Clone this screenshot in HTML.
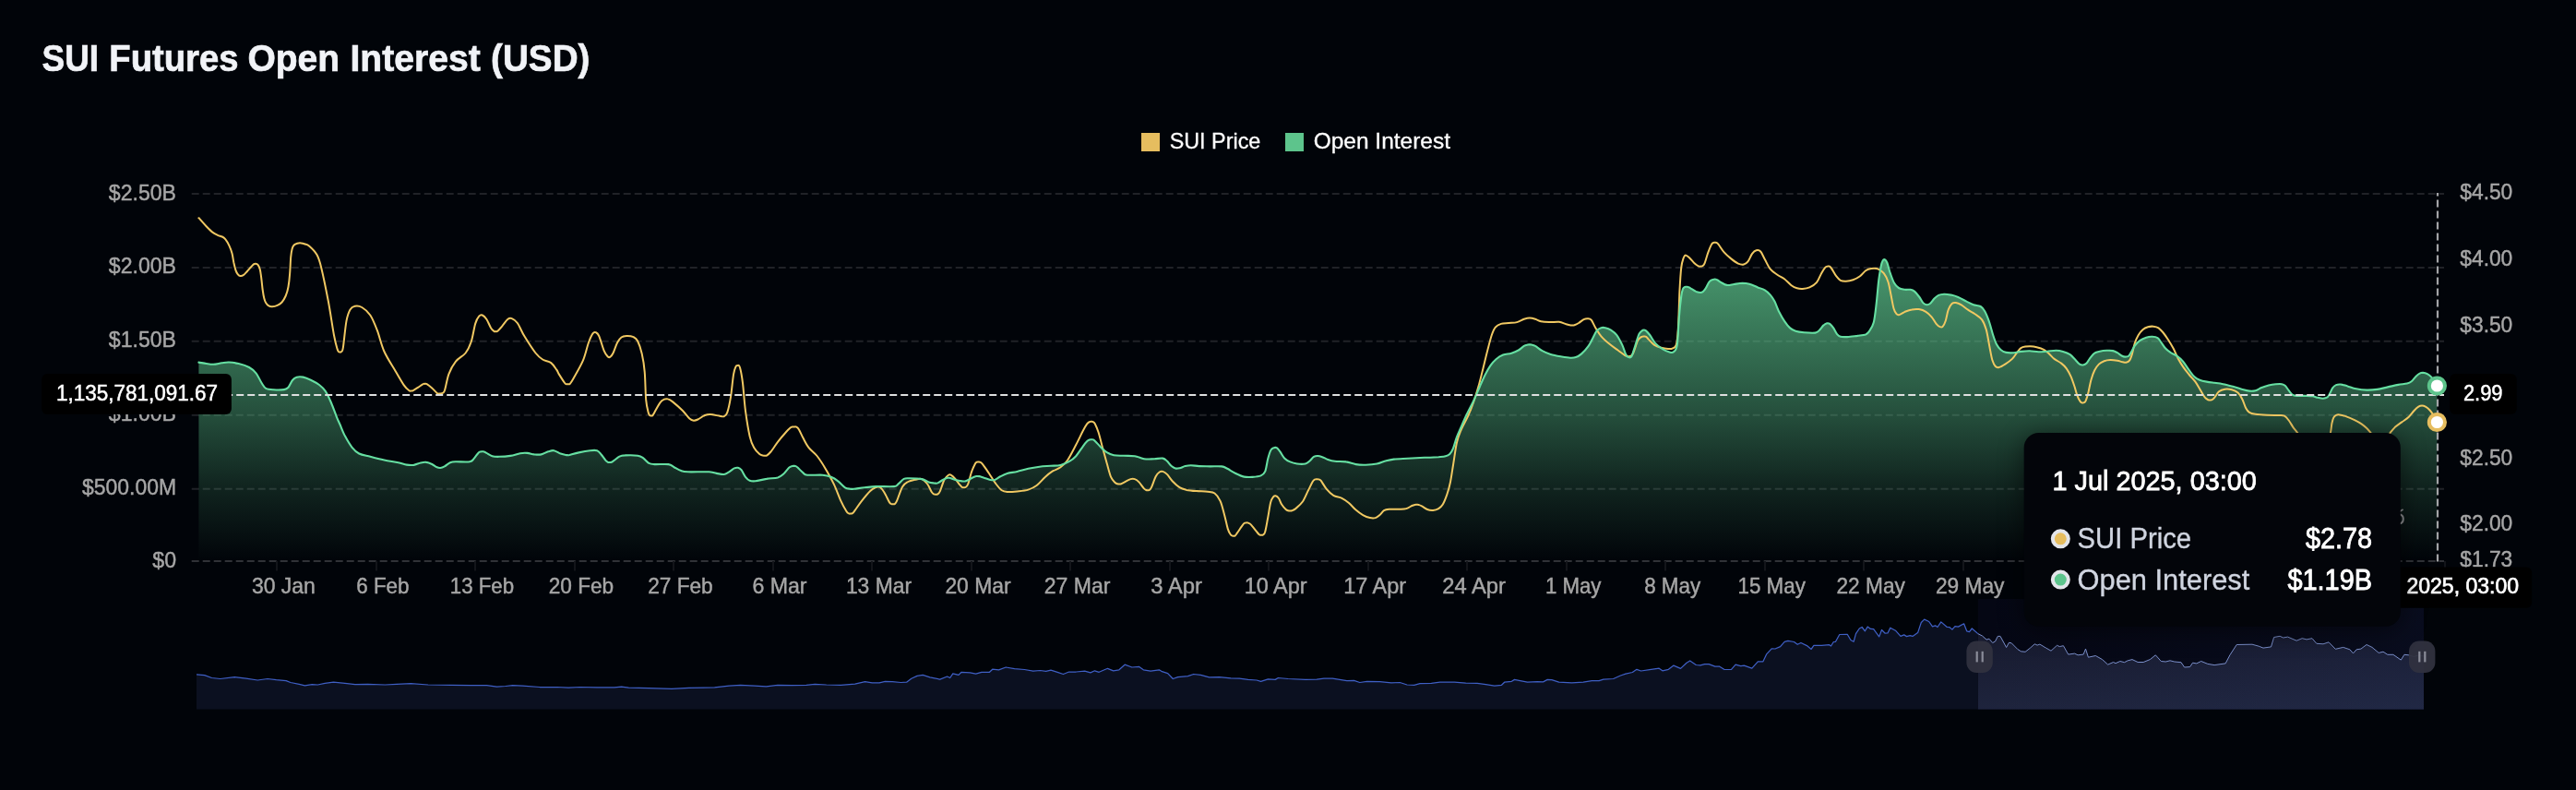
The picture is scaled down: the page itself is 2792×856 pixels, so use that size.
<!DOCTYPE html>
<html><head><meta charset="utf-8"><title>SUI Futures Open Interest (USD)</title>
<style>
html,body{margin:0;padding:0;background:#010409;}
body{width:2792px;height:856px;overflow:hidden;font-family:"Liberation Sans",sans-serif;}
svg{display:block;will-change:transform;font-family:"Liberation Sans",sans-serif;}
</style></head><body>
<svg width="2792" height="856" viewBox="0 0 2792 856">
<defs>
<linearGradient id="ga" x1="0" y1="281" x2="0" y2="608" gradientUnits="userSpaceOnUse">
<stop offset="0" stop-color="#5dc48c" stop-opacity="0.78"/>
<stop offset="0.5" stop-color="#5dc48c" stop-opacity="0.40"/>
<stop offset="0.75" stop-color="#5dc48c" stop-opacity="0.17"/>
<stop offset="1" stop-color="#5dc48c" stop-opacity="0.0"/>
</linearGradient>
<linearGradient id="gs" x1="0" y1="690" x2="0" y2="769" gradientUnits="userSpaceOnUse">
<stop offset="0" stop-color="#171a2e"/>
<stop offset="1" stop-color="#1e243d"/>
</linearGradient>
<linearGradient id="gh" x1="2143.8" y1="0" x2="2627" y2="0" gradientUnits="userSpaceOnUse">
<stop offset="0" stop-color="#506ec8" stop-opacity="0"/>
<stop offset="1" stop-color="#506ec8" stop-opacity="0.055"/>
</linearGradient>
<clipPath id="cw"><rect x="2143.8" y="649" width="483.2" height="119.8"/></clipPath>
<clipPath id="co"><rect x="213" y="649" width="1930.8" height="119.8"/></clipPath>
<filter id="sh" x="-20%" y="-20%" width="140%" height="140%"><feGaussianBlur stdDeviation="14"/></filter>
</defs>
<rect width="2792" height="856" fill="#010409"/>

<text x="45.6" y="77.2" font-size="40" fill="#f1f3f7" text-anchor="start" font-weight="700" textLength="61.4" lengthAdjust="spacingAndGlyphs" stroke="#f1f3f7" stroke-width="0.7">SUI</text>
<text x="118.3" y="77.2" font-size="40" fill="#f1f3f7" text-anchor="start" font-weight="700" textLength="140.1" lengthAdjust="spacingAndGlyphs" stroke="#f1f3f7" stroke-width="0.7">Futures</text>
<text x="268.5" y="77.2" font-size="40" fill="#f1f3f7" text-anchor="start" font-weight="700" textLength="99.6" lengthAdjust="spacingAndGlyphs" stroke="#f1f3f7" stroke-width="0.7">Open</text>
<text x="379.5" y="77.2" font-size="40" fill="#f1f3f7" text-anchor="start" font-weight="700" textLength="141.3" lengthAdjust="spacingAndGlyphs" stroke="#f1f3f7" stroke-width="0.7">Interest</text>
<text x="532.1" y="77.2" font-size="40" fill="#f1f3f7" text-anchor="start" font-weight="700" textLength="107.3" lengthAdjust="spacingAndGlyphs" stroke="#f1f3f7" stroke-width="0.7">(USD)</text>
<rect x="1237" y="144" width="20" height="20" fill="#e6bd5f"/>
<text x="1267.7" y="161" font-size="24" fill="#ffffff" text-anchor="start" font-weight="400" textLength="98.6" lengthAdjust="spacingAndGlyphs" stroke="#fff" stroke-width="0.3">SUI Price</text>
<rect x="1393" y="144" width="20" height="20" fill="#5dc48c"/>
<text x="1423.7" y="161" font-size="24" fill="#ffffff" text-anchor="start" font-weight="400" textLength="148.3" lengthAdjust="spacingAndGlyphs" stroke="#fff" stroke-width="0.3">Open Interest</text>
<line x1="207.7" x2="2649" y1="210" y2="210" stroke="#202227" stroke-width="2" stroke-dasharray="8 4"/>
<line x1="207.7" x2="2649" y1="289.9" y2="289.9" stroke="#202227" stroke-width="2" stroke-dasharray="8 4"/>
<line x1="207.7" x2="2649" y1="369.8" y2="369.8" stroke="#202227" stroke-width="2" stroke-dasharray="8 4"/>
<line x1="207.7" x2="2649" y1="449.8" y2="449.8" stroke="#202227" stroke-width="2" stroke-dasharray="8 4"/>
<line x1="207.7" x2="2649" y1="529.7" y2="529.7" stroke="#202227" stroke-width="2" stroke-dasharray="8 4"/>
<line x1="207.7" x2="2649" y1="608" y2="608" stroke="#303237" stroke-width="2" stroke-dasharray="8 4"/>
<line x1="300" x2="300" y1="608" y2="618.5" stroke="#13151a" stroke-width="2"/>
<line x1="408" x2="408" y1="608" y2="618.5" stroke="#13151a" stroke-width="2"/>
<line x1="515" x2="515" y1="608" y2="618.5" stroke="#13151a" stroke-width="2"/>
<line x1="623" x2="623" y1="608" y2="618.5" stroke="#13151a" stroke-width="2"/>
<line x1="730" x2="730" y1="608" y2="618.5" stroke="#13151a" stroke-width="2"/>
<line x1="838" x2="838" y1="608" y2="618.5" stroke="#13151a" stroke-width="2"/>
<line x1="945" x2="945" y1="608" y2="618.5" stroke="#13151a" stroke-width="2"/>
<line x1="1053" x2="1053" y1="608" y2="618.5" stroke="#13151a" stroke-width="2"/>
<line x1="1160" x2="1160" y1="608" y2="618.5" stroke="#13151a" stroke-width="2"/>
<line x1="1268" x2="1268" y1="608" y2="618.5" stroke="#13151a" stroke-width="2"/>
<line x1="1375" x2="1375" y1="608" y2="618.5" stroke="#13151a" stroke-width="2"/>
<line x1="1483" x2="1483" y1="608" y2="618.5" stroke="#13151a" stroke-width="2"/>
<line x1="1590" x2="1590" y1="608" y2="618.5" stroke="#13151a" stroke-width="2"/>
<line x1="1698" x2="1698" y1="608" y2="618.5" stroke="#13151a" stroke-width="2"/>
<line x1="1805" x2="1805" y1="608" y2="618.5" stroke="#13151a" stroke-width="2"/>
<line x1="1913" x2="1913" y1="608" y2="618.5" stroke="#13151a" stroke-width="2"/>
<line x1="2020" x2="2020" y1="608" y2="618.5" stroke="#13151a" stroke-width="2"/>
<line x1="2128" x2="2128" y1="608" y2="618.5" stroke="#13151a" stroke-width="2"/>
<line x1="2235" x2="2235" y1="608" y2="618.5" stroke="#13151a" stroke-width="2"/>
<line x1="2343" x2="2343" y1="608" y2="618.5" stroke="#13151a" stroke-width="2"/>
<line x1="2450" x2="2450" y1="608" y2="618.5" stroke="#13151a" stroke-width="2"/>
<line x1="2558" x2="2558" y1="608" y2="618.5" stroke="#13151a" stroke-width="2"/>
<line x1="2650" x2="2650" y1="608" y2="618.5" stroke="#13151a" stroke-width="2"/>
<path d="M215.4,392.6C216.8,392.8 221.0,393.6 223.7,394.0C226.3,394.4 228.5,394.9 231.3,394.8C234.1,394.7 237.6,393.7 240.4,393.3C243.2,392.9 245.0,392.4 248.0,392.5C251.0,392.6 254.9,393.1 258.6,394.0C262.3,394.9 266.9,396.3 270.0,398.0C273.1,399.7 275.2,401.5 277.5,404.3C279.8,407.1 281.8,412.2 283.6,415.0C285.4,417.8 286.1,419.6 288.2,420.8C290.3,422.0 293.2,422.1 296.5,422.3C299.8,422.5 305.3,422.5 308.0,422.1C310.7,421.7 311.0,421.4 312.5,419.7C314.0,418.0 315.5,413.8 317.0,412.0C318.5,410.2 319.7,409.3 321.6,408.7C323.5,408.1 326.0,408.1 328.5,408.6C331.0,409.1 333.9,410.3 336.8,411.7C339.7,413.1 343.4,415.0 346.0,417.0C348.6,419.0 350.6,420.6 352.7,423.8C354.8,427.0 356.8,431.3 358.8,436.0C360.8,440.7 363.3,447.8 364.9,451.8C366.5,455.8 367.0,456.5 368.5,460.0C370.0,463.5 371.8,468.5 374.0,472.6C376.2,476.7 379.1,481.7 381.6,484.8C384.1,487.9 385.9,489.8 389.2,491.5C392.5,493.2 396.8,493.6 401.3,494.8C405.9,496.0 411.4,497.4 416.5,498.5C421.6,499.6 427.6,500.3 431.7,501.2C435.8,502.1 438.0,503.2 440.8,503.6C443.6,504.1 445.9,504.2 448.4,503.9C450.9,503.5 453.7,502.0 456.0,501.5C458.3,501.0 460.1,500.6 462.1,500.9C464.1,501.1 466.3,502.1 468.2,503.0C470.1,503.9 472.1,505.6 473.6,506.3C475.1,507.0 475.9,507.1 477.3,507.0C478.7,506.9 480.0,506.4 481.8,505.4C483.6,504.4 485.9,502.0 487.9,501.2C489.9,500.4 490.4,500.4 494.0,500.3C497.6,500.2 505.9,500.9 509.2,500.3C512.5,499.7 512.2,498.5 513.7,496.9C515.2,495.3 517.1,492.1 518.3,490.9C519.5,489.7 520.0,489.7 520.8,489.5C521.5,489.2 522.1,489.3 522.8,489.3C523.5,489.3 524.0,489.2 524.8,489.5C525.6,489.7 525.9,490.1 527.4,490.9C528.9,491.7 531.2,493.5 533.5,494.2C535.8,494.9 537.8,494.9 541.1,494.8C544.4,494.8 549.4,494.5 553.2,493.9C557.0,493.3 560.8,491.7 563.8,491.2C566.8,490.7 568.9,490.7 571.4,490.9C573.9,491.1 576.5,492.1 579.0,492.4C581.5,492.6 584.1,492.9 586.6,492.4C589.1,491.9 591.9,490.0 594.2,489.3C596.5,488.6 598.1,487.8 600.3,488.2C602.5,488.6 605.5,490.8 607.6,491.6C609.8,492.4 611.9,492.8 613.2,493.0C614.5,493.3 614.5,493.1 615.2,493.1C615.9,493.1 615.2,493.4 617.2,493.0C619.2,492.5 623.6,491.2 627.3,490.4C631.0,489.6 636.2,488.6 639.5,488.2C642.8,487.8 645.1,487.5 647.1,488.2C649.1,488.9 650.1,490.8 651.6,492.5C653.1,494.2 655.0,497.2 656.2,498.6C657.4,500.0 658.0,500.3 658.7,500.7C659.5,501.1 660.0,501.0 660.7,501.0C661.4,501.0 661.9,501.1 662.7,500.8C663.5,500.5 663.8,500.2 665.3,499.2C666.8,498.2 669.4,495.6 671.4,494.6C673.4,493.6 674.1,493.5 677.4,493.4C680.7,493.2 687.8,493.2 691.1,493.7C694.4,494.2 695.2,495.0 697.2,496.4C699.2,497.8 701.3,500.8 703.3,501.9C705.3,503.0 705.8,502.9 709.3,503.1C712.8,503.3 721.0,502.6 724.5,503.1C728.0,503.6 728.3,505.0 730.6,506.2C732.9,507.4 735.7,509.2 738.2,510.1C740.7,511.0 740.7,511.1 745.8,511.3C750.9,511.5 763.3,511.0 768.6,511.3C773.9,511.6 775.0,512.6 777.7,513.1C780.4,513.6 782.7,514.2 784.7,514.0C786.7,513.8 787.9,512.7 789.8,511.6C791.7,510.5 794.2,508.2 795.9,507.4C797.6,506.6 798.5,506.5 799.8,506.8C801.1,507.1 802.1,507.5 803.5,509.2C804.9,510.9 806.5,514.9 808.0,516.8C809.5,518.7 810.8,520.0 812.6,520.7C814.4,521.5 815.7,521.6 818.7,521.3C821.7,521.0 826.8,519.5 830.8,518.9C834.8,518.2 840.0,518.2 843.0,517.4C846.0,516.5 847.0,515.6 849.0,513.8C851.0,512.0 853.5,508.3 855.1,506.8C856.7,505.3 857.7,505.4 858.6,505.1C859.5,504.7 860.0,504.9 860.6,504.9C861.2,504.9 861.8,504.8 862.5,505.1C863.2,505.4 863.5,505.6 864.8,506.8C866.1,508.0 868.6,510.9 870.3,512.2C872.0,513.5 871.3,514.3 874.9,514.7C878.5,515.1 887.3,514.4 891.6,514.7C895.9,515.1 897.9,515.7 900.7,516.8C903.5,517.9 905.8,519.4 908.3,521.3C910.8,523.2 913.7,526.9 915.9,528.3C918.1,529.7 920.2,529.5 921.5,529.7C922.8,530.0 922.8,529.8 923.5,529.8C924.2,529.8 923.2,530.0 925.5,529.7C927.8,529.5 933.1,528.7 937.1,528.3C941.1,527.9 944.0,527.3 949.3,527.1C954.6,526.9 965.0,527.6 969.0,527.1C973.0,526.6 971.8,525.8 973.6,524.4C975.4,523.0 977.7,519.9 979.7,518.9C981.7,517.9 982.5,518.3 985.7,518.3C988.9,518.3 995.6,518.4 999.1,519.1C1002.6,519.8 1004.5,521.7 1006.7,522.4C1008.9,523.1 1011.0,523.3 1012.3,523.5C1013.6,523.7 1013.6,523.6 1014.3,523.6C1015.0,523.6 1015.0,524.0 1016.3,523.4C1017.6,522.8 1020.3,520.9 1021.9,520.0C1023.5,519.1 1025.0,518.3 1026.0,518.0C1027.0,517.6 1027.3,517.8 1028.0,517.8C1028.7,517.8 1028.7,517.6 1030.0,517.9C1031.3,518.3 1033.5,519.4 1035.6,520.0C1037.7,520.6 1041.2,521.2 1042.7,521.4C1044.2,521.7 1044.0,521.5 1044.7,521.5C1045.4,521.5 1045.4,521.8 1046.7,521.3C1048.0,520.8 1050.5,519.4 1052.3,518.5C1054.0,517.6 1056.0,516.6 1057.2,516.2C1058.4,515.8 1058.5,516.0 1059.2,516.0C1059.9,516.0 1060.1,515.9 1061.2,516.1C1062.3,516.4 1063.9,516.9 1065.9,517.5C1068.0,518.1 1071.5,519.6 1073.5,520.0C1075.5,520.4 1076.3,520.6 1078.1,520.0C1079.9,519.4 1081.9,517.5 1084.2,516.3C1086.5,515.1 1088.7,513.9 1091.7,513.0C1094.7,512.1 1098.6,511.8 1102.4,510.9C1106.2,510.0 1110.5,508.7 1114.5,507.8C1118.5,506.9 1122.7,506.2 1126.7,505.7C1130.8,505.2 1135.0,505.1 1138.8,504.8C1142.6,504.5 1146.2,504.7 1149.5,503.9C1152.8,503.1 1155.8,501.8 1158.6,500.2C1161.4,498.6 1163.7,497.0 1166.2,494.2C1168.7,491.4 1171.8,486.2 1173.8,483.5C1175.8,480.8 1177.1,479.3 1178.3,478.1C1179.5,476.9 1180.1,476.7 1180.9,476.4C1181.7,476.1 1182.2,476.2 1182.9,476.2C1183.6,476.2 1184.2,476.1 1184.9,476.4C1185.7,476.8 1186.0,477.0 1187.4,478.4C1188.8,479.8 1191.5,483.0 1193.5,485.0C1195.5,487.0 1197.3,488.8 1199.6,490.2C1201.9,491.6 1204.2,492.6 1207.2,493.2C1210.2,493.8 1214.0,493.6 1217.8,493.8C1221.6,494.0 1226.9,493.8 1229.9,494.2C1232.9,494.6 1234.0,495.4 1236.0,496.0C1238.0,496.6 1239.6,497.3 1242.1,497.5C1244.6,497.7 1248.2,497.3 1251.2,497.2C1254.2,497.1 1258.0,496.2 1260.3,496.6C1262.6,497.0 1263.4,498.2 1264.9,499.6C1266.4,501.0 1267.9,503.5 1269.4,504.8C1270.9,506.1 1272.5,507.1 1274.0,507.5C1275.5,507.9 1276.7,507.6 1278.5,507.2C1280.3,506.8 1282.6,505.6 1284.6,505.1C1286.6,504.6 1288.2,504.2 1290.7,504.2C1293.2,504.2 1296.3,504.9 1299.8,505.1C1303.3,505.3 1307.9,505.3 1311.9,505.4C1316.0,505.4 1321.0,505.0 1324.1,505.4C1327.1,505.8 1327.7,506.5 1330.2,507.8C1332.7,509.1 1336.3,511.5 1339.3,513.0C1342.3,514.5 1345.4,516.0 1348.4,516.6C1351.4,517.2 1354.5,517.1 1357.5,516.9C1360.5,516.7 1364.3,516.4 1366.6,515.4C1368.9,514.4 1369.9,513.9 1371.2,510.9C1372.5,507.9 1373.2,501.0 1374.2,497.2C1375.2,493.4 1376.2,490.1 1377.2,488.1C1378.2,486.1 1379.2,485.9 1380.3,485.4C1381.4,484.9 1382.4,484.5 1383.6,485.2C1384.8,485.9 1386.2,487.8 1387.6,489.7C1389.0,491.6 1390.3,494.6 1392.1,496.4C1393.9,498.2 1395.9,499.4 1398.2,500.4C1400.5,501.4 1403.0,502.1 1405.8,502.5C1408.6,502.9 1412.6,503.0 1414.9,502.5C1417.2,502.0 1418.0,500.8 1419.5,499.5C1421.0,498.2 1422.5,495.8 1424.0,494.9C1425.5,494.0 1427.1,493.9 1428.6,494.0C1430.1,494.1 1431.4,494.6 1433.2,495.2C1435.0,495.8 1436.9,497.1 1439.2,497.9C1441.5,498.7 1443.5,499.4 1446.8,499.8C1450.1,500.2 1455.2,499.8 1459.0,500.4C1462.8,500.9 1466.1,502.6 1469.6,503.1C1473.1,503.7 1476.4,503.8 1480.2,503.7C1484.0,503.6 1488.9,503.2 1492.4,502.5C1496.0,501.8 1498.5,500.3 1501.5,499.5C1504.5,498.7 1506.5,498.1 1510.6,497.6C1514.6,497.1 1520.2,497.0 1525.8,496.7C1531.4,496.4 1538.4,496.1 1544.0,495.8C1549.6,495.6 1555.4,495.4 1559.2,495.2C1563.0,494.9 1564.8,494.9 1566.8,494.3C1568.8,493.8 1569.9,493.3 1571.3,491.9C1572.7,490.5 1573.7,488.9 1575.0,485.8C1576.3,482.8 1577.5,477.4 1578.9,473.6C1580.3,469.8 1581.7,467.1 1583.5,463.0C1585.3,458.9 1587.3,454.1 1589.6,449.3C1591.9,444.5 1594.9,439.0 1597.2,434.2C1599.5,429.4 1601.2,425.1 1603.2,420.5C1605.2,415.9 1607.3,410.9 1609.3,406.8C1611.3,402.8 1613.4,399.1 1615.4,396.2C1617.4,393.3 1619.2,391.1 1621.5,389.2C1623.8,387.3 1626.3,385.7 1629.1,384.6C1631.9,383.5 1635.4,383.7 1638.2,382.8C1641.0,381.9 1643.5,380.8 1645.8,379.5C1648.1,378.2 1650.1,375.9 1651.8,374.9C1653.5,373.9 1654.9,373.8 1655.9,373.5C1656.9,373.3 1657.2,373.4 1657.9,373.4C1658.6,373.4 1658.9,373.3 1659.9,373.5C1660.9,373.8 1662.0,373.8 1664.0,374.9C1666.0,376.0 1668.8,378.6 1671.6,380.1C1674.4,381.6 1677.2,382.9 1680.7,384.0C1684.2,385.1 1689.3,385.9 1692.8,386.5C1696.3,387.1 1699.4,387.6 1701.9,387.7C1704.4,387.8 1706.0,387.8 1708.0,387.1C1710.0,386.4 1711.8,385.4 1714.1,383.4C1716.4,381.4 1719.7,377.7 1721.7,374.9C1723.7,372.1 1724.7,369.5 1726.2,366.7C1727.7,363.9 1729.3,360.1 1730.8,358.2C1732.3,356.3 1733.9,355.7 1735.4,355.2C1736.9,354.7 1738.1,354.8 1739.9,355.2C1741.7,355.6 1744.0,356.3 1746.0,357.6C1748.0,358.9 1750.1,360.2 1752.1,362.8C1754.1,365.4 1756.4,369.9 1758.1,373.4C1759.8,376.9 1760.9,381.7 1762.1,384.0C1763.3,386.3 1764.1,386.7 1765.1,387.1C1766.1,387.5 1767.2,388.0 1768.2,386.5C1769.2,385.0 1770.3,380.7 1771.2,378.0C1772.1,375.3 1772.7,373.2 1773.6,370.5C1774.5,367.8 1775.5,363.6 1776.7,361.5C1777.9,359.4 1779.4,358.4 1780.6,357.8C1781.8,357.2 1782.4,357.2 1783.7,358.1C1785.0,359.0 1786.4,360.7 1788.2,363.0C1790.0,365.3 1792.0,369.6 1794.3,372.1C1796.6,374.6 1799.4,376.6 1801.9,378.2C1804.4,379.8 1807.5,381.0 1809.5,381.5C1811.5,382.0 1812.6,382.5 1814.0,381.2C1815.4,379.9 1816.8,379.9 1817.8,373.6C1818.8,367.3 1819.1,352.2 1819.9,343.3C1820.6,334.4 1821.6,325.6 1822.3,320.5C1823.0,315.4 1823.5,314.5 1824.1,312.9C1824.7,311.3 1825.5,311.4 1826.1,311.0C1826.7,310.7 1827.1,310.8 1827.7,310.8C1828.3,310.8 1828.9,310.7 1829.7,311.0C1830.5,311.2 1830.9,311.5 1832.3,312.3C1833.7,313.1 1836.3,315.1 1838.3,315.9C1840.3,316.6 1842.7,317.3 1844.4,316.8C1846.1,316.3 1847.0,314.8 1848.4,312.9C1849.8,311.0 1851.2,307.0 1852.6,305.3C1854.0,303.6 1855.3,303.3 1856.6,302.9C1857.9,302.5 1859.0,302.3 1860.5,302.9C1862.0,303.4 1863.8,305.2 1865.7,306.2C1867.6,307.2 1869.4,308.6 1871.7,308.9C1874.0,309.2 1876.5,308.4 1879.3,308.0C1882.1,307.6 1885.7,306.9 1888.5,306.8C1891.3,306.8 1893.2,306.9 1896.0,307.7C1898.8,308.5 1902.4,310.3 1905.2,311.4C1908.0,312.5 1910.5,313.0 1912.8,314.4C1915.1,315.8 1917.0,317.6 1918.8,319.6C1920.6,321.6 1921.9,323.7 1923.4,326.6C1924.9,329.5 1926.1,333.7 1927.9,337.2C1929.7,340.7 1932.0,344.8 1934.0,347.8C1936.0,350.8 1938.1,353.6 1940.1,355.4C1942.1,357.2 1943.7,358.0 1946.2,358.8C1948.7,359.6 1951.8,360.0 1955.3,360.3C1958.8,360.6 1964.6,361.0 1967.4,360.6C1970.2,360.2 1970.5,359.2 1972.0,357.8C1973.5,356.4 1975.1,353.6 1976.5,352.4C1977.9,351.1 1979.1,350.6 1980.2,350.3C1981.3,350.1 1982.0,350.0 1983.2,350.9C1984.4,351.8 1985.9,353.5 1987.2,355.4C1988.5,357.3 1989.8,360.5 1991.1,362.1C1992.4,363.7 1992.9,364.3 1994.8,364.8C1996.7,365.3 1999.3,365.2 2002.3,365.1C2005.3,365.0 2009.7,364.3 2013.0,363.9C2016.3,363.4 2020.0,363.1 2022.1,362.4C2024.2,361.6 2024.2,361.6 2025.7,359.4C2027.2,357.2 2029.5,354.5 2030.8,349.3C2032.1,344.1 2032.9,335.7 2033.8,328.1C2034.7,320.5 2035.4,310.4 2036.2,303.8C2037.0,297.2 2038.0,292.2 2038.7,288.6C2039.4,285.1 2039.9,283.7 2040.6,282.5C2041.3,281.3 2042.0,280.9 2042.8,281.3C2043.6,281.7 2044.5,282.5 2045.5,285.0C2046.5,287.5 2047.5,292.6 2048.8,296.2C2050.1,299.8 2051.6,304.2 2053.1,306.8C2054.6,309.4 2056.0,310.8 2057.9,312.0C2059.8,313.2 2062.5,313.5 2064.6,313.8C2066.7,314.1 2068.9,313.5 2070.7,313.8C2072.5,314.1 2073.6,314.5 2075.2,315.9C2076.8,317.3 2078.9,320.0 2080.4,322.0C2081.9,324.0 2083.0,326.7 2084.3,328.1C2085.6,329.5 2087.0,330.1 2088.3,330.2C2089.6,330.3 2090.5,330.1 2091.9,329.0C2093.3,327.9 2095.0,325.0 2096.5,323.5C2098.0,322.0 2099.3,320.7 2101.1,319.9C2102.9,319.1 2104.8,318.8 2107.1,318.7C2109.4,318.6 2112.2,319.1 2114.7,319.6C2117.2,320.2 2119.5,320.8 2122.3,322.0C2125.1,323.2 2128.6,325.2 2131.4,326.6C2134.2,328.0 2136.5,329.3 2139.0,330.2C2141.5,331.1 2144.6,330.8 2146.6,332.0C2148.6,333.2 2149.7,334.6 2151.2,337.2C2152.7,339.8 2154.2,343.6 2155.7,347.8C2157.2,352.0 2158.7,358.4 2160.0,362.5C2161.3,366.6 2162.4,369.9 2163.8,372.7C2165.2,375.4 2166.8,377.5 2168.5,379.0C2170.2,380.5 2171.8,381.4 2174.2,381.9C2176.6,382.4 2180.1,382.4 2182.8,382.2C2185.5,382.0 2187.6,381.2 2190.4,380.9C2193.2,380.6 2196.7,380.2 2199.9,380.3C2203.1,380.4 2206.2,381.2 2209.4,381.3C2212.6,381.4 2215.7,380.9 2218.9,380.7C2222.1,380.4 2225.6,379.8 2228.4,379.8C2231.2,379.8 2233.5,380.2 2236.0,380.9C2238.5,381.6 2241.4,382.6 2243.6,384.1C2245.8,385.6 2247.6,388.1 2249.3,389.8C2251.0,391.6 2252.6,393.7 2254.0,394.6C2255.4,395.6 2256.5,395.7 2257.8,395.5C2259.1,395.3 2260.3,394.9 2261.6,393.6C2262.9,392.3 2264.0,389.7 2265.4,387.9C2266.8,386.1 2268.4,383.8 2270.2,382.6C2271.9,381.4 2273.7,381.2 2275.9,380.7C2278.1,380.2 2281.1,379.9 2283.5,379.8C2285.9,379.7 2288.2,379.7 2290.1,380.1C2292.0,380.5 2293.3,381.3 2294.9,382.2C2296.5,383.1 2298.2,384.8 2299.6,385.5C2301.0,386.2 2302.1,386.6 2303.4,386.6C2304.7,386.6 2306.1,386.6 2307.2,385.7C2308.3,384.8 2308.9,383.1 2310.0,381.3C2311.1,379.5 2312.2,376.7 2313.8,374.6C2315.4,372.5 2317.4,370.4 2319.5,368.9C2321.6,367.4 2324.0,366.4 2326.2,365.7C2328.4,365.0 2330.8,364.7 2332.8,364.8C2334.9,364.9 2336.9,365.1 2338.5,366.1C2340.1,367.1 2340.9,368.9 2342.3,370.8C2343.7,372.7 2345.3,375.6 2347.1,377.5C2348.8,379.4 2350.8,380.8 2352.8,382.2C2354.9,383.6 2357.2,384.1 2359.4,385.7C2361.6,387.3 2363.9,389.1 2366.1,391.7C2368.3,394.3 2370.6,398.4 2372.7,401.2C2374.8,404.0 2376.5,406.6 2378.4,408.3C2380.3,410.1 2381.9,410.8 2384.1,411.7C2386.3,412.6 2389.0,413.1 2391.7,413.6C2394.3,414.1 2397.0,414.4 2400.0,414.8C2403.0,415.2 2406.0,415.5 2409.5,416.2C2413.0,416.9 2417.4,418.1 2420.9,419.0C2424.4,419.9 2427.6,421.1 2430.4,421.9C2433.2,422.7 2435.6,423.4 2438.0,423.6C2440.4,423.8 2442.4,423.8 2444.6,423.2C2446.8,422.6 2448.9,420.9 2451.3,420.0C2453.7,419.1 2456.4,418.1 2458.9,417.5C2461.4,416.9 2464.1,416.5 2466.5,416.3C2468.9,416.1 2471.4,415.9 2473.1,416.2C2474.8,416.5 2475.6,416.9 2476.9,418.1C2478.2,419.3 2479.4,421.6 2480.7,423.2C2482.0,424.8 2483.1,426.7 2484.5,427.6C2485.9,428.6 2486.9,428.7 2489.3,428.9C2491.7,429.1 2496.0,428.8 2498.8,428.9C2501.7,429.0 2504.2,429.0 2506.4,429.3C2508.6,429.6 2510.2,430.4 2512.1,430.8C2514.0,431.2 2516.1,431.8 2517.8,431.7C2519.5,431.6 2521.2,431.3 2522.5,430.4C2523.8,429.4 2524.5,427.7 2525.4,426.0C2526.3,424.3 2527.1,421.8 2528.2,420.3C2529.3,418.8 2530.6,417.7 2532.0,417.1C2533.4,416.5 2534.8,416.3 2536.8,416.5C2538.9,416.7 2541.5,417.6 2544.3,418.4C2547.1,419.2 2550.3,420.6 2553.8,421.3C2557.3,422.0 2561.4,422.5 2565.2,422.6C2569.0,422.7 2572.8,422.4 2576.6,421.9C2580.4,421.4 2584.2,420.2 2588.0,419.4C2591.8,418.6 2595.9,417.5 2599.4,416.9C2602.9,416.3 2606.5,416.2 2608.9,415.6C2611.3,415.0 2612.1,414.6 2613.7,413.3C2615.3,412.0 2617.0,409.4 2618.4,408.0C2619.8,406.6 2620.9,405.5 2622.2,404.8C2623.5,404.1 2624.6,403.8 2626.0,403.8C2627.4,403.9 2629.2,404.2 2630.8,405.1C2632.4,406.0 2634.1,407.3 2635.5,408.9C2636.9,410.5 2638.3,413.1 2639.3,414.6C2640.3,416.1 2641.1,417.4 2641.4,418.0L2641.4,608.0L215.4,608.0Z" fill="url(#ga)"/>
<path d="M215.4,236.2C215.6,236.4 215.1,235.7 216.4,237.2C217.7,238.7 221.1,242.6 223.4,245.0C225.7,247.4 228.2,250.0 230.3,251.6C232.4,253.2 234.2,254.0 235.9,254.8C237.7,255.6 239.4,255.8 240.8,256.5C242.2,257.2 242.9,257.6 244.2,259.2C245.5,260.8 247.2,263.6 248.4,266.2C249.6,268.8 250.7,271.5 251.5,274.5C252.3,277.5 252.7,281.3 253.3,284.3C254.0,287.3 254.7,290.5 255.4,292.6C256.1,294.7 256.7,295.8 257.5,296.8C258.3,297.9 259.2,298.7 260.2,298.9C261.2,299.1 262.4,299.0 263.7,298.2C265.0,297.4 266.5,295.5 267.9,294.0C269.3,292.5 270.9,290.5 272.1,289.2C273.3,287.9 274.1,287.0 274.9,286.4C275.7,285.8 276.2,285.6 277.0,285.7C277.8,285.8 278.9,286.1 279.7,287.1C280.5,288.2 281.2,289.7 281.8,292.0C282.4,294.3 282.7,297.4 283.2,301.0C283.7,304.6 284.1,309.8 284.6,313.5C285.1,317.2 285.7,320.9 286.3,323.3C286.9,325.7 287.3,326.8 288.1,328.1C288.9,329.4 289.8,330.5 290.9,331.2C292.0,331.9 293.4,332.4 295.0,332.3C296.6,332.2 298.9,331.7 300.6,330.9C302.4,330.1 304.0,329.2 305.5,327.5C307.0,325.8 308.5,323.3 309.7,320.5C310.9,317.7 311.8,314.6 312.5,310.7C313.2,306.8 313.7,302.1 314.1,296.8C314.6,291.5 314.8,283.2 315.2,278.7C315.6,274.2 316.0,271.9 316.6,269.7C317.2,267.5 317.8,266.5 318.7,265.5C319.6,264.5 320.9,264.1 322.2,263.7C323.5,263.3 325.0,263.3 326.4,263.4C327.8,263.5 329.2,264.0 330.6,264.5C332.0,265.0 332.8,264.6 335.0,266.5C337.2,268.4 341.4,272.3 343.6,276.2C345.8,280.1 346.2,281.5 348.2,289.9C350.2,298.2 353.5,314.2 355.8,326.3C358.1,338.4 360.3,354.1 361.9,362.7C363.5,371.3 364.6,374.8 365.5,377.9C366.4,381.0 366.6,380.6 367.1,381.2C367.6,381.8 368.0,381.6 368.5,381.6C369.0,381.6 369.5,381.9 370.0,381.0C370.6,380.2 371.0,382.0 371.9,376.4C372.8,370.8 374.2,354.4 375.5,347.6C376.8,340.8 378.0,338.0 379.5,335.4C381.0,332.8 382.5,332.2 384.6,331.8C386.7,331.4 389.4,331.4 392.2,333.0C395.0,334.6 398.5,337.3 401.3,341.5C404.1,345.7 406.4,351.6 408.9,358.2C411.4,364.8 413.2,373.7 416.5,381.0C419.8,388.3 425.1,396.1 428.7,402.2C432.2,408.3 435.4,413.9 437.8,417.4C440.2,420.9 442.1,422.1 443.4,423.1C444.7,424.1 444.7,423.5 445.4,423.5C446.1,423.5 446.1,423.9 447.4,423.3C448.7,422.7 451.1,421.1 453.0,419.9C454.9,418.7 457.3,416.8 458.6,416.2C459.9,415.5 459.9,415.9 460.6,415.9C461.3,415.9 461.3,415.4 462.6,416.2C463.9,417.0 466.3,418.8 468.2,420.5C470.1,422.2 472.5,425.1 473.8,426.1C475.1,427.1 475.1,426.5 475.8,426.5C476.5,426.5 476.8,426.8 477.8,426.3C478.8,425.8 480.4,427.0 481.8,423.5C483.2,420.0 484.4,410.6 486.4,405.3C488.4,400.0 491.0,395.4 494.0,391.6C497.0,387.8 501.8,386.1 504.6,382.5C507.4,378.9 508.9,375.6 510.7,370.3C512.5,365.0 513.8,355.2 515.2,350.6C516.6,346.0 517.9,344.2 519.2,342.7C520.5,341.2 521.4,340.9 522.8,341.5C524.2,342.1 525.9,343.7 527.4,346.0C528.9,348.3 530.7,353.1 532.0,355.2C533.3,357.3 534.5,358.1 535.4,358.8C536.3,359.4 536.7,359.1 537.4,359.1C538.1,359.1 538.3,359.6 539.4,358.7C540.5,357.8 542.3,355.7 544.1,353.6C545.9,351.5 548.4,347.4 550.2,346.0C552.0,344.6 552.9,344.4 554.7,345.1C556.5,345.8 558.5,346.8 560.8,350.0C563.1,353.2 565.1,358.9 568.4,364.3C571.7,369.7 577.2,378.3 580.5,382.5C583.8,386.7 585.3,387.7 588.1,389.5C590.9,391.3 594.7,391.2 597.2,393.1C599.7,395.0 601.8,398.6 603.3,400.7C604.8,402.8 604.6,403.5 606.1,405.9C607.6,408.3 610.8,413.3 612.1,415.0C613.4,416.7 613.5,415.9 614.1,416.2C614.8,416.4 615.2,416.4 615.8,416.3C616.4,416.2 616.9,416.8 617.8,415.8C618.7,414.8 618.9,414.7 621.3,410.5C623.6,406.3 629.1,397.3 631.9,390.7C634.7,384.1 636.2,375.9 638.0,371.0C639.8,366.1 641.2,363.1 642.5,361.3C643.8,359.5 644.5,359.7 645.6,360.1C646.7,360.6 647.7,360.7 649.2,364.0C650.7,367.3 653.1,376.4 654.7,380.1C656.3,383.8 657.5,385.1 658.6,386.2C659.7,387.3 660.4,387.5 661.4,386.8C662.4,386.1 663.4,384.8 664.7,382.2C666.0,379.6 667.7,373.8 669.2,371.0C670.7,368.2 671.9,366.7 673.5,365.5C675.1,364.3 676.8,364.1 679.0,364.0C681.2,363.9 684.6,364.3 686.6,365.2C688.6,366.1 689.6,366.5 691.1,369.5C692.6,372.5 694.4,377.6 695.7,383.2C697.0,388.8 698.0,394.5 698.7,402.9C699.5,411.2 699.5,426.0 700.2,433.3C700.9,440.6 702.0,444.1 702.7,446.9C703.4,449.7 703.9,449.6 704.4,450.2C704.9,450.8 705.2,450.6 705.7,450.6C706.2,450.6 706.7,450.8 707.3,450.2C707.9,449.6 708.0,449.2 709.3,446.9C710.6,444.6 713.6,438.7 715.4,436.3C717.2,433.9 718.6,433.4 720.0,432.7C721.4,432.0 722.4,431.9 723.9,432.4C725.4,432.8 726.5,433.3 729.1,435.4C731.7,437.5 736.7,441.8 739.7,444.8C742.7,447.8 745.3,451.8 747.3,453.6C749.3,455.4 750.4,455.6 751.9,455.7C753.4,455.8 754.4,455.4 756.4,454.5C758.4,453.6 761.7,450.9 764.0,450.0C766.3,449.1 767.6,449.0 770.1,449.1C772.6,449.2 776.8,450.2 779.2,450.6C781.6,451.0 783.2,451.8 784.7,451.2C786.2,450.6 787.1,450.4 788.3,446.9C789.5,443.4 790.9,437.0 792.0,430.2C793.1,423.4 794.1,411.4 795.0,405.9C795.9,400.4 796.6,399.1 797.4,397.4C798.1,395.7 798.7,395.8 799.5,395.9C800.3,396.0 801.1,395.1 802.0,398.3C802.9,401.5 804.0,407.1 805.0,415.0C806.0,422.9 806.7,435.8 808.0,445.4C809.3,455.0 811.1,466.1 812.6,472.7C814.1,479.3 815.4,481.7 817.2,484.9C819.0,488.1 821.5,490.5 823.2,491.9C824.9,493.3 826.3,493.3 827.3,493.6C828.3,493.9 828.6,493.7 829.3,493.7C830.0,493.7 830.3,494.1 831.3,493.4C832.3,492.7 833.4,491.9 835.4,489.5C837.4,487.1 840.5,482.1 843.0,478.8C845.5,475.5 848.3,472.2 850.6,469.7C852.9,467.2 855.2,464.8 856.6,463.6C858.0,462.4 858.4,462.7 859.2,462.5C860.0,462.3 860.5,462.4 861.2,462.4C861.9,462.4 862.4,462.2 863.2,462.7C864.0,463.2 864.6,463.3 865.8,465.2C867.0,467.1 868.5,471.0 870.3,474.3C872.1,477.6 873.9,481.6 876.4,484.9C878.9,488.2 882.5,490.2 885.5,494.0C888.5,497.8 891.6,502.6 894.6,507.7C897.6,512.8 900.9,518.6 903.7,524.4C906.5,530.2 909.0,537.6 911.3,542.6C913.6,547.6 916.0,551.8 917.4,554.1C918.8,556.4 919.1,555.9 919.9,556.3C920.6,556.8 921.2,556.6 921.9,556.6C922.6,556.6 923.1,556.8 923.9,556.2C924.7,555.7 924.8,555.5 926.5,553.2C928.2,550.9 931.3,546.1 934.1,542.6C936.9,539.1 940.7,534.4 943.2,532.0C945.7,529.6 947.5,528.7 949.3,528.0C951.1,527.3 952.3,527.1 953.8,528.0C955.3,528.9 956.7,530.8 958.4,533.5C960.1,536.2 962.6,542.0 963.9,544.1C965.2,546.2 965.5,545.7 966.2,546.1C966.9,546.4 967.5,546.3 968.1,546.3C968.7,546.3 969.2,546.5 969.9,545.9C970.6,545.3 970.7,545.7 972.1,542.6C973.5,539.5 976.1,530.8 978.1,527.4C980.1,524.0 981.9,523.3 984.2,522.0C986.5,520.7 989.3,520.3 991.8,519.8C994.3,519.3 996.9,518.3 999.1,519.1C1001.3,519.9 1003.4,522.2 1005.2,524.5C1007.0,526.8 1008.5,531.2 1009.7,533.0C1010.9,534.8 1011.5,535.0 1012.3,535.5C1013.1,536.0 1013.6,535.8 1014.3,535.8C1015.0,535.8 1015.5,536.0 1016.3,535.4C1017.1,534.8 1017.7,534.7 1018.9,532.1C1020.1,529.5 1021.9,522.9 1023.4,520.0C1024.9,517.1 1026.7,515.7 1028.0,514.8C1029.3,513.9 1029.7,514.1 1031.0,514.8C1032.3,515.5 1034.1,517.4 1035.6,519.1C1037.1,520.8 1038.9,523.6 1040.1,525.1C1041.3,526.6 1041.9,527.4 1042.7,527.9C1043.5,528.4 1044.0,528.2 1044.7,528.2C1045.4,528.2 1046.0,528.4 1046.7,527.8C1047.5,527.2 1048.1,527.3 1049.2,524.5C1050.3,521.7 1051.9,514.5 1053.2,510.9C1054.5,507.3 1055.9,504.4 1056.8,502.7C1057.7,501.0 1058.2,501.1 1058.8,500.7C1059.5,500.4 1059.9,500.5 1060.5,500.5C1061.1,500.5 1061.7,500.3 1062.5,500.8C1063.3,501.2 1063.7,501.3 1065.3,503.3C1066.9,505.3 1069.6,509.5 1072.0,513.0C1074.4,516.5 1077.3,521.5 1079.6,524.5C1081.9,527.5 1083.7,529.8 1085.7,531.2C1087.7,532.6 1088.9,532.8 1091.7,533.0C1094.5,533.2 1098.6,532.8 1102.4,532.4C1106.2,532.0 1111.0,531.7 1114.5,530.6C1118.0,529.5 1120.6,528.3 1123.6,526.0C1126.6,523.7 1129.9,519.4 1132.7,516.9C1135.5,514.4 1137.5,512.7 1140.3,510.9C1143.1,509.1 1146.7,508.3 1149.5,506.3C1152.3,504.3 1154.2,502.8 1157.0,498.7C1159.8,494.6 1163.4,487.3 1166.2,482.0C1169.0,476.7 1171.8,470.6 1173.8,466.8C1175.8,463.0 1177.1,460.8 1178.3,459.2C1179.5,457.6 1180.1,457.5 1180.9,457.1C1181.7,456.7 1182.3,456.8 1182.9,456.8C1183.5,456.8 1184.0,456.7 1184.7,457.1C1185.3,457.5 1185.8,457.3 1186.8,459.2C1187.8,461.1 1189.1,464.0 1190.5,468.3C1191.9,472.6 1193.5,479.4 1195.0,485.0C1196.5,490.6 1198.1,496.4 1199.6,501.7C1201.1,507.0 1202.6,513.4 1204.1,516.9C1205.6,520.4 1207.5,521.8 1208.7,523.0C1209.9,524.2 1210.5,524.1 1211.2,524.3C1212.0,524.6 1212.5,524.5 1213.2,524.5C1213.9,524.5 1214.2,524.7 1215.2,524.3C1216.2,523.9 1217.6,523.0 1219.3,522.1C1221.0,521.2 1223.6,519.6 1225.4,519.1C1227.2,518.6 1228.4,518.6 1229.9,519.1C1231.4,519.6 1232.9,520.7 1234.5,522.4C1236.1,524.1 1238.4,527.7 1239.7,529.1C1241.0,530.5 1241.5,530.6 1242.2,531.0C1243.0,531.3 1243.6,531.2 1244.2,531.2C1244.8,531.2 1245.3,531.4 1246.0,530.8C1246.7,530.2 1247.1,530.0 1248.2,527.6C1249.3,525.2 1251.3,519.0 1252.7,516.3C1254.1,513.6 1255.4,512.4 1256.7,511.5C1258.0,510.6 1258.9,510.5 1260.3,510.9C1261.7,511.3 1263.1,512.1 1264.9,513.9C1266.7,515.7 1268.6,519.1 1270.9,521.5C1273.2,523.9 1276.0,526.6 1278.5,528.2C1281.0,529.8 1283.0,530.2 1286.1,530.9C1289.1,531.5 1293.0,531.8 1296.8,532.1C1300.6,532.4 1305.6,532.3 1308.9,532.7C1312.2,533.1 1314.2,532.8 1316.5,534.5C1318.8,536.2 1320.8,538.9 1322.6,542.8C1324.4,546.7 1325.7,552.8 1327.1,557.9C1328.5,563.0 1329.7,569.5 1330.8,573.1C1331.9,576.7 1333.0,578.0 1333.8,579.2C1334.6,580.4 1335.0,580.3 1335.5,580.5C1336.0,580.8 1336.4,580.7 1336.9,580.7C1337.4,580.7 1338.0,580.9 1338.7,580.4C1339.3,579.9 1339.6,579.4 1340.8,577.7C1342.0,576.0 1344.7,571.9 1346.0,570.1C1347.3,568.3 1348.0,567.4 1348.8,566.8C1349.6,566.2 1350.1,566.4 1350.8,566.4C1351.5,566.4 1351.9,566.2 1352.8,566.6C1353.7,567.0 1354.5,567.0 1356.0,568.6C1357.5,570.2 1360.6,574.4 1362.1,576.2C1363.6,578.0 1364.3,578.9 1365.2,579.5C1366.1,580.1 1366.6,579.8 1367.2,579.8C1367.8,579.8 1368.3,580.0 1369.0,579.4C1369.7,578.8 1370.3,579.3 1371.2,576.2C1372.1,573.1 1373.2,566.3 1374.2,561.0C1375.2,555.7 1376.2,548.1 1377.2,544.3C1378.2,540.5 1379.4,539.4 1380.3,538.2C1381.2,537.0 1381.8,537.0 1382.7,537.3C1383.7,537.6 1384.9,538.5 1386.0,540.0C1387.1,541.5 1387.8,544.5 1389.1,546.5C1390.4,548.5 1392.5,550.9 1393.7,552.0C1394.9,553.1 1395.5,553.1 1396.2,553.3C1397.0,553.6 1397.5,553.5 1398.2,553.5C1398.9,553.5 1399.2,553.7 1400.2,553.3C1401.2,552.9 1402.3,552.7 1404.3,551.1C1406.2,549.5 1409.6,546.8 1411.9,543.5C1414.2,540.2 1416.2,534.8 1418.0,531.3C1419.8,527.8 1421.3,524.2 1422.5,522.2C1423.7,520.2 1424.3,520.0 1425.1,519.5C1425.9,519.0 1426.4,519.2 1427.1,519.2C1427.8,519.2 1428.3,519.1 1429.1,519.4C1429.8,519.6 1430.2,519.0 1431.6,520.7C1433.0,522.4 1435.4,527.1 1437.7,529.8C1440.0,532.5 1442.5,535.1 1445.3,536.8C1448.1,538.5 1451.6,538.4 1454.4,539.8C1457.2,541.2 1459.5,542.9 1462.0,545.0C1464.5,547.1 1467.1,550.4 1469.6,552.6C1472.1,554.8 1474.7,556.7 1477.2,558.1C1479.7,559.5 1482.5,560.6 1484.8,561.1C1487.1,561.6 1489.1,561.6 1490.9,561.1C1492.7,560.6 1493.9,559.4 1495.4,558.1C1496.9,556.8 1498.2,554.3 1500.0,553.2C1501.8,552.1 1503.2,552.0 1506.0,551.7C1508.8,551.5 1513.7,551.8 1516.7,551.7C1519.8,551.6 1522.0,551.7 1524.3,551.1C1526.6,550.5 1528.8,548.7 1530.3,548.0C1531.8,547.3 1532.6,547.1 1533.5,546.9C1534.4,546.7 1534.8,546.8 1535.5,546.8C1536.2,546.8 1536.6,546.7 1537.5,546.9C1538.4,547.2 1539.4,547.6 1541.0,548.4C1542.6,549.2 1545.0,551.2 1547.0,552.0C1549.0,552.8 1551.1,553.0 1553.1,552.9C1555.1,552.8 1557.4,552.2 1559.2,551.1C1561.0,550.0 1562.3,549.0 1563.8,546.5C1565.3,544.0 1566.9,539.9 1568.3,535.9C1569.7,531.9 1570.9,527.5 1572.0,522.2C1573.1,516.9 1573.8,511.1 1575.0,504.0C1576.2,496.9 1577.5,486.0 1578.9,479.7C1580.3,473.4 1581.5,470.8 1583.5,466.0C1585.5,461.2 1588.8,455.9 1591.1,450.9C1593.4,445.8 1595.1,441.5 1597.1,435.7C1599.1,429.9 1601.4,422.2 1603.2,415.9C1605.0,409.6 1606.3,403.8 1607.8,397.7C1609.3,391.6 1610.8,385.3 1612.3,379.5C1613.8,373.7 1615.5,366.9 1616.9,362.8C1618.3,358.7 1619.1,356.6 1620.8,354.6C1622.5,352.6 1624.5,351.7 1626.9,350.9C1629.3,350.1 1632.2,350.3 1635.1,350.0C1638.0,349.7 1641.4,349.8 1644.2,349.1C1647.0,348.4 1649.5,346.6 1651.8,345.8C1654.1,345.1 1655.9,344.6 1657.9,344.6C1659.9,344.6 1662.0,345.2 1664.0,345.8C1666.0,346.4 1667.6,347.6 1670.1,348.2C1672.6,348.8 1675.9,349.0 1679.2,349.1C1682.5,349.2 1686.8,348.5 1689.8,348.8C1692.8,349.1 1695.3,350.6 1697.4,351.2C1699.5,351.8 1701.2,352.2 1702.4,352.4C1703.6,352.6 1703.7,352.5 1704.4,352.5C1705.1,352.5 1705.3,352.7 1706.4,352.3C1707.5,351.9 1709.4,351.0 1711.1,350.0C1712.8,349.0 1714.9,346.9 1716.5,346.1C1718.1,345.3 1719.4,345.1 1720.8,345.2C1722.2,345.3 1723.3,345.0 1724.7,346.7C1726.1,348.4 1727.5,352.3 1729.3,355.2C1731.1,358.1 1732.9,361.4 1735.4,364.3C1737.9,367.2 1741.5,370.3 1744.5,372.8C1747.5,375.3 1750.8,377.5 1753.6,379.5C1756.4,381.5 1759.2,383.9 1761.2,385.0C1763.2,386.1 1764.3,386.4 1765.7,386.2C1767.1,386.0 1768.3,385.6 1769.4,384.0C1770.5,382.4 1771.5,378.8 1772.4,376.4C1773.3,374.0 1773.9,371.2 1774.8,369.5C1775.7,367.8 1776.7,366.8 1777.6,366.0C1778.5,365.2 1779.3,364.9 1780.1,364.7C1780.8,364.4 1781.4,364.5 1782.1,364.5C1782.8,364.5 1783.3,364.3 1784.1,364.8C1784.9,365.3 1785.2,366.1 1786.7,367.6C1788.2,369.1 1790.5,372.1 1792.8,373.6C1795.1,375.1 1797.9,376.0 1800.4,376.7C1802.9,377.4 1806.0,377.8 1808.0,377.9C1810.0,378.0 1811.0,378.3 1812.5,377.6C1814.0,376.9 1815.7,377.3 1816.8,373.6C1817.9,369.9 1818.3,365.0 1818.9,355.4C1819.5,345.8 1819.9,326.8 1820.4,315.9C1821.0,305.0 1821.5,296.2 1822.2,290.1C1822.9,284.0 1823.9,281.8 1824.7,279.5C1825.5,277.2 1825.8,276.5 1826.8,276.4C1827.8,276.3 1829.0,277.4 1830.7,278.9C1832.4,280.4 1835.1,284.0 1836.8,285.6C1838.5,287.2 1839.9,287.9 1840.9,288.4C1841.9,288.9 1842.2,288.6 1842.9,288.6C1843.6,288.6 1844.2,288.8 1844.9,288.3C1845.7,287.8 1846.3,288.1 1847.4,285.6C1848.5,283.1 1850.1,276.8 1851.4,273.4C1852.7,269.9 1854.1,266.6 1855.0,264.9C1855.9,263.2 1856.4,263.4 1857.0,263.0C1857.7,262.7 1858.1,262.8 1858.7,262.8C1859.3,262.8 1859.8,262.7 1860.5,263.0C1861.1,263.4 1861.2,263.2 1862.6,264.9C1864.0,266.6 1866.4,270.8 1868.7,273.4C1871.0,276.0 1873.8,278.4 1876.3,280.4C1878.8,282.4 1881.6,284.6 1883.9,285.6C1886.2,286.6 1888.2,286.9 1890.0,286.5C1891.8,286.1 1893.0,285.3 1894.5,283.4C1896.0,281.5 1897.6,276.9 1899.1,274.9C1900.6,272.9 1902.1,271.7 1903.6,271.3C1905.1,270.9 1906.7,270.9 1908.2,272.5C1909.7,274.1 1911.0,277.8 1912.8,281.0C1914.6,284.2 1916.5,288.8 1918.8,291.6C1921.1,294.4 1923.9,295.9 1926.4,297.7C1928.9,299.5 1931.5,300.4 1934.0,302.3C1936.5,304.2 1939.3,307.5 1941.6,309.2C1943.9,310.9 1945.7,311.7 1947.7,312.3C1949.7,312.9 1951.5,313.0 1953.8,312.9C1956.1,312.8 1958.8,312.5 1961.3,311.4C1963.8,310.3 1966.8,308.7 1968.9,306.2C1971.0,303.7 1972.6,298.9 1974.1,296.2C1975.6,293.5 1977.0,291.3 1978.0,290.1C1979.0,288.9 1979.4,289.0 1980.0,288.8C1980.7,288.5 1981.1,288.6 1981.7,288.6C1982.3,288.6 1982.8,288.4 1983.5,288.9C1984.1,289.4 1984.5,289.9 1985.6,291.6C1986.7,293.3 1988.7,297.2 1990.2,299.2C1991.7,301.2 1993.0,302.9 1994.8,303.8C1996.6,304.7 1998.5,304.8 2000.8,304.7C2003.1,304.6 2005.9,304.1 2008.4,303.2C2010.9,302.3 2013.7,300.9 2016.0,299.2C2018.3,297.5 2020.1,294.6 2022.1,293.2C2024.1,291.8 2025.9,291.3 2028.2,291.0C2030.5,290.7 2033.5,290.7 2035.8,291.6C2038.1,292.5 2040.0,293.9 2041.8,296.2C2043.6,298.5 2045.1,301.5 2046.4,305.3C2047.7,309.1 2048.4,314.2 2049.4,319.0C2050.4,323.8 2051.5,330.7 2052.5,334.2C2053.5,337.7 2054.5,339.0 2055.5,340.2C2056.5,341.4 2057.0,341.5 2058.5,341.1C2060.0,340.7 2062.3,338.8 2064.6,337.8C2066.9,336.9 2069.7,335.8 2072.2,335.4C2074.7,334.9 2077.3,334.7 2079.8,335.1C2082.3,335.5 2085.1,336.4 2087.4,337.8C2089.7,339.2 2091.6,341.1 2093.5,343.3C2095.4,345.5 2097.1,349.1 2098.6,350.9C2100.1,352.7 2101.4,353.7 2102.6,354.2C2103.8,354.7 2104.6,355.0 2105.6,353.9C2106.6,352.8 2107.7,350.8 2108.7,347.8C2109.7,344.8 2110.5,338.8 2111.7,335.7C2112.8,332.6 2114.2,330.3 2115.6,329.0C2117.0,327.7 2118.3,327.9 2119.9,328.1C2121.5,328.3 2123.2,328.9 2125.4,330.2C2127.6,331.5 2130.5,334.0 2133.0,335.7C2135.5,337.4 2138.0,338.4 2140.5,340.2C2143.0,342.0 2146.1,343.5 2148.1,346.3C2150.1,349.1 2151.3,352.1 2152.7,356.9C2154.1,361.7 2155.2,369.6 2156.3,375.2C2157.4,380.8 2158.3,386.7 2159.4,390.3C2160.5,393.9 2161.6,395.7 2162.8,397.0C2164.0,398.3 2164.8,398.4 2166.6,398.0C2168.3,397.6 2170.9,396.1 2173.3,394.6C2175.7,393.1 2178.7,391.1 2180.9,388.9C2183.1,386.7 2185.0,383.3 2186.6,381.3C2188.2,379.3 2189.0,378.1 2190.4,377.1C2191.8,376.2 2193.4,375.9 2195.1,375.6C2196.8,375.3 2198.7,375.1 2200.8,375.2C2202.9,375.3 2205.1,375.6 2207.5,376.2C2209.9,376.8 2212.9,377.6 2215.1,378.8C2217.3,380.0 2218.9,381.5 2220.8,383.2C2222.7,384.9 2224.3,387.2 2226.5,388.9C2228.7,390.6 2231.9,391.9 2234.1,393.6C2236.3,395.3 2238.1,396.9 2239.8,399.3C2241.5,401.7 2243.1,404.7 2244.5,407.9C2245.9,411.1 2247.2,415.0 2248.3,418.3C2249.4,421.6 2250.2,425.2 2251.2,427.8C2252.1,430.4 2253.2,432.7 2254.0,434.1C2254.8,435.5 2255.2,435.8 2255.8,436.2C2256.3,436.5 2256.7,436.4 2257.2,436.4C2257.7,436.4 2258.2,436.5 2258.8,436.2C2259.4,435.8 2259.9,436.0 2260.7,434.1C2261.5,432.2 2262.6,428.7 2263.5,425.0C2264.4,421.3 2265.3,415.7 2266.4,411.7C2267.5,407.7 2268.8,404.0 2270.2,401.2C2271.6,398.4 2273.2,396.3 2274.9,394.6C2276.6,392.9 2278.5,392.0 2280.6,391.2C2282.7,390.4 2284.9,390.1 2287.3,390.0C2289.7,389.9 2292.7,390.4 2294.9,390.8C2297.1,391.2 2299.0,392.0 2300.6,392.3C2302.2,392.6 2303.1,393.0 2304.4,392.7C2305.7,392.4 2307.1,392.0 2308.2,390.4C2309.3,388.8 2310.1,386.3 2311.0,383.2C2311.9,380.1 2312.7,375.1 2313.8,371.8C2314.9,368.5 2316.2,365.6 2317.6,363.2C2319.0,360.8 2320.7,358.7 2322.4,357.2C2324.2,355.7 2326.2,354.9 2328.1,354.3C2330.0,353.7 2331.9,353.5 2333.8,353.7C2335.7,353.9 2337.8,354.2 2339.5,355.3C2341.2,356.4 2342.5,357.9 2344.2,360.0C2345.9,362.1 2348.0,365.1 2349.9,368.0C2351.8,370.9 2353.8,374.2 2355.6,377.5C2357.3,380.8 2358.7,384.6 2360.4,387.9C2362.2,391.2 2364.1,394.4 2366.1,397.4C2368.1,400.4 2370.5,403.3 2372.7,406.0C2374.9,408.7 2377.3,410.8 2379.4,413.6C2381.5,416.5 2383.4,420.2 2385.1,423.1C2386.8,426.0 2388.4,429.0 2389.8,430.7C2391.2,432.4 2392.6,432.8 2393.5,433.3C2394.4,433.7 2394.8,433.5 2395.5,433.5C2396.2,433.5 2396.7,433.7 2397.5,433.2C2398.3,432.8 2399.1,432.2 2400.3,430.7C2401.6,429.2 2403.2,425.8 2405.0,424.3C2406.8,422.8 2409.1,422.1 2411.4,421.7C2413.7,421.3 2416.6,421.6 2419.0,422.2C2421.4,422.8 2423.7,423.8 2425.6,425.5C2427.5,427.2 2429.0,429.9 2430.4,432.7C2431.8,435.5 2432.9,439.8 2434.2,442.2C2435.5,444.6 2436.3,445.8 2438.0,446.9C2439.7,448.0 2441.4,448.3 2444.6,448.8C2447.8,449.3 2452.7,449.6 2457.0,449.8C2461.3,450.0 2467.1,449.9 2470.3,450.0C2473.5,450.1 2474.3,449.8 2476.0,450.7C2477.7,451.6 2479.1,453.4 2480.7,455.5C2482.3,457.6 2483.9,460.8 2485.5,463.1C2487.1,465.4 2488.4,466.5 2490.2,469.1C2491.9,471.8 2494.0,475.5 2496.0,479.0C2498.0,482.5 2500.0,487.0 2502.0,490.0C2504.0,493.0 2506.5,495.5 2508.0,497.0C2509.5,498.5 2510.2,498.5 2511.0,498.8C2511.8,499.1 2512.3,499.0 2513.0,499.0C2513.7,499.0 2514.2,499.2 2515.0,498.7C2515.8,498.2 2516.8,498.3 2518.0,496.0C2519.2,493.7 2520.7,489.5 2522.0,485.0C2523.3,480.5 2525.0,473.4 2525.9,469.1C2526.8,464.8 2526.8,462.1 2527.3,459.3C2527.9,456.6 2528.4,454.2 2529.2,452.6C2530.0,451.0 2530.9,450.3 2532.0,449.8C2533.1,449.3 2534.1,449.2 2535.8,449.4C2537.6,449.6 2539.8,450.2 2542.5,451.1C2545.2,452.1 2549.2,453.7 2552.0,455.1C2554.8,456.5 2557.3,457.8 2559.5,459.3C2561.7,460.8 2563.5,462.4 2565.2,464.0C2566.9,465.6 2568.1,467.3 2569.6,469.1C2571.1,470.9 2572.8,473.4 2574.0,475.0C2575.2,476.6 2576.2,477.9 2577.0,478.6C2577.8,479.3 2578.3,479.0 2579.0,479.0C2579.7,479.0 2580.2,479.1 2581.0,478.8C2581.8,478.5 2582.4,478.6 2584.0,477.0C2585.6,475.4 2588.6,471.4 2590.5,469.1C2592.4,466.8 2593.5,465.1 2595.6,463.1C2597.7,461.2 2600.7,459.3 2603.2,457.4C2605.7,455.5 2608.6,453.8 2610.8,451.7C2613.0,449.6 2614.8,446.8 2616.5,445.0C2618.2,443.2 2619.9,441.6 2621.3,440.7C2622.7,439.8 2623.8,439.5 2625.1,439.5C2626.4,439.5 2627.5,439.9 2628.9,440.7C2630.3,441.5 2632.2,443.0 2633.6,444.5C2635.0,446.0 2636.1,447.6 2637.4,449.8C2638.7,452.0 2640.7,456.2 2641.4,457.5" fill="none" stroke="#f0c862" stroke-width="2.0" stroke-linejoin="round" stroke-linecap="round"/>
<path d="M215.4,392.6C216.8,392.8 221.0,393.6 223.7,394.0C226.3,394.4 228.5,394.9 231.3,394.8C234.1,394.7 237.6,393.7 240.4,393.3C243.2,392.9 245.0,392.4 248.0,392.5C251.0,392.6 254.9,393.1 258.6,394.0C262.3,394.9 266.9,396.3 270.0,398.0C273.1,399.7 275.2,401.5 277.5,404.3C279.8,407.1 281.8,412.2 283.6,415.0C285.4,417.8 286.1,419.6 288.2,420.8C290.3,422.0 293.2,422.1 296.5,422.3C299.8,422.5 305.3,422.5 308.0,422.1C310.7,421.7 311.0,421.4 312.5,419.7C314.0,418.0 315.5,413.8 317.0,412.0C318.5,410.2 319.7,409.3 321.6,408.7C323.5,408.1 326.0,408.1 328.5,408.6C331.0,409.1 333.9,410.3 336.8,411.7C339.7,413.1 343.4,415.0 346.0,417.0C348.6,419.0 350.6,420.6 352.7,423.8C354.8,427.0 356.8,431.3 358.8,436.0C360.8,440.7 363.3,447.8 364.9,451.8C366.5,455.8 367.0,456.5 368.5,460.0C370.0,463.5 371.8,468.5 374.0,472.6C376.2,476.7 379.1,481.7 381.6,484.8C384.1,487.9 385.9,489.8 389.2,491.5C392.5,493.2 396.8,493.6 401.3,494.8C405.9,496.0 411.4,497.4 416.5,498.5C421.6,499.6 427.6,500.3 431.7,501.2C435.8,502.1 438.0,503.2 440.8,503.6C443.6,504.1 445.9,504.2 448.4,503.9C450.9,503.5 453.7,502.0 456.0,501.5C458.3,501.0 460.1,500.6 462.1,500.9C464.1,501.1 466.3,502.1 468.2,503.0C470.1,503.9 472.1,505.6 473.6,506.3C475.1,507.0 475.9,507.1 477.3,507.0C478.7,506.9 480.0,506.4 481.8,505.4C483.6,504.4 485.9,502.0 487.9,501.2C489.9,500.4 490.4,500.4 494.0,500.3C497.6,500.2 505.9,500.9 509.2,500.3C512.5,499.7 512.2,498.5 513.7,496.9C515.2,495.3 517.1,492.1 518.3,490.9C519.5,489.7 520.0,489.7 520.8,489.5C521.5,489.2 522.1,489.3 522.8,489.3C523.5,489.3 524.0,489.2 524.8,489.5C525.6,489.7 525.9,490.1 527.4,490.9C528.9,491.7 531.2,493.5 533.5,494.2C535.8,494.9 537.8,494.9 541.1,494.8C544.4,494.8 549.4,494.5 553.2,493.9C557.0,493.3 560.8,491.7 563.8,491.2C566.8,490.7 568.9,490.7 571.4,490.9C573.9,491.1 576.5,492.1 579.0,492.4C581.5,492.6 584.1,492.9 586.6,492.4C589.1,491.9 591.9,490.0 594.2,489.3C596.5,488.6 598.1,487.8 600.3,488.2C602.5,488.6 605.5,490.8 607.6,491.6C609.8,492.4 611.9,492.8 613.2,493.0C614.5,493.3 614.5,493.1 615.2,493.1C615.9,493.1 615.2,493.4 617.2,493.0C619.2,492.5 623.6,491.2 627.3,490.4C631.0,489.6 636.2,488.6 639.5,488.2C642.8,487.8 645.1,487.5 647.1,488.2C649.1,488.9 650.1,490.8 651.6,492.5C653.1,494.2 655.0,497.2 656.2,498.6C657.4,500.0 658.0,500.3 658.7,500.7C659.5,501.1 660.0,501.0 660.7,501.0C661.4,501.0 661.9,501.1 662.7,500.8C663.5,500.5 663.8,500.2 665.3,499.2C666.8,498.2 669.4,495.6 671.4,494.6C673.4,493.6 674.1,493.5 677.4,493.4C680.7,493.2 687.8,493.2 691.1,493.7C694.4,494.2 695.2,495.0 697.2,496.4C699.2,497.8 701.3,500.8 703.3,501.9C705.3,503.0 705.8,502.9 709.3,503.1C712.8,503.3 721.0,502.6 724.5,503.1C728.0,503.6 728.3,505.0 730.6,506.2C732.9,507.4 735.7,509.2 738.2,510.1C740.7,511.0 740.7,511.1 745.8,511.3C750.9,511.5 763.3,511.0 768.6,511.3C773.9,511.6 775.0,512.6 777.7,513.1C780.4,513.6 782.7,514.2 784.7,514.0C786.7,513.8 787.9,512.7 789.8,511.6C791.7,510.5 794.2,508.2 795.9,507.4C797.6,506.6 798.5,506.5 799.8,506.8C801.1,507.1 802.1,507.5 803.5,509.2C804.9,510.9 806.5,514.9 808.0,516.8C809.5,518.7 810.8,520.0 812.6,520.7C814.4,521.5 815.7,521.6 818.7,521.3C821.7,521.0 826.8,519.5 830.8,518.9C834.8,518.2 840.0,518.2 843.0,517.4C846.0,516.5 847.0,515.6 849.0,513.8C851.0,512.0 853.5,508.3 855.1,506.8C856.7,505.3 857.7,505.4 858.6,505.1C859.5,504.7 860.0,504.9 860.6,504.9C861.2,504.9 861.8,504.8 862.5,505.1C863.2,505.4 863.5,505.6 864.8,506.8C866.1,508.0 868.6,510.9 870.3,512.2C872.0,513.5 871.3,514.3 874.9,514.7C878.5,515.1 887.3,514.4 891.6,514.7C895.9,515.1 897.9,515.7 900.7,516.8C903.5,517.9 905.8,519.4 908.3,521.3C910.8,523.2 913.7,526.9 915.9,528.3C918.1,529.7 920.2,529.5 921.5,529.7C922.8,530.0 922.8,529.8 923.5,529.8C924.2,529.8 923.2,530.0 925.5,529.7C927.8,529.5 933.1,528.7 937.1,528.3C941.1,527.9 944.0,527.3 949.3,527.1C954.6,526.9 965.0,527.6 969.0,527.1C973.0,526.6 971.8,525.8 973.6,524.4C975.4,523.0 977.7,519.9 979.7,518.9C981.7,517.9 982.5,518.3 985.7,518.3C988.9,518.3 995.6,518.4 999.1,519.1C1002.6,519.8 1004.5,521.7 1006.7,522.4C1008.9,523.1 1011.0,523.3 1012.3,523.5C1013.6,523.7 1013.6,523.6 1014.3,523.6C1015.0,523.6 1015.0,524.0 1016.3,523.4C1017.6,522.8 1020.3,520.9 1021.9,520.0C1023.5,519.1 1025.0,518.3 1026.0,518.0C1027.0,517.6 1027.3,517.8 1028.0,517.8C1028.7,517.8 1028.7,517.6 1030.0,517.9C1031.3,518.3 1033.5,519.4 1035.6,520.0C1037.7,520.6 1041.2,521.2 1042.7,521.4C1044.2,521.7 1044.0,521.5 1044.7,521.5C1045.4,521.5 1045.4,521.8 1046.7,521.3C1048.0,520.8 1050.5,519.4 1052.3,518.5C1054.0,517.6 1056.0,516.6 1057.2,516.2C1058.4,515.8 1058.5,516.0 1059.2,516.0C1059.9,516.0 1060.1,515.9 1061.2,516.1C1062.3,516.4 1063.9,516.9 1065.9,517.5C1068.0,518.1 1071.5,519.6 1073.5,520.0C1075.5,520.4 1076.3,520.6 1078.1,520.0C1079.9,519.4 1081.9,517.5 1084.2,516.3C1086.5,515.1 1088.7,513.9 1091.7,513.0C1094.7,512.1 1098.6,511.8 1102.4,510.9C1106.2,510.0 1110.5,508.7 1114.5,507.8C1118.5,506.9 1122.7,506.2 1126.7,505.7C1130.8,505.2 1135.0,505.1 1138.8,504.8C1142.6,504.5 1146.2,504.7 1149.5,503.9C1152.8,503.1 1155.8,501.8 1158.6,500.2C1161.4,498.6 1163.7,497.0 1166.2,494.2C1168.7,491.4 1171.8,486.2 1173.8,483.5C1175.8,480.8 1177.1,479.3 1178.3,478.1C1179.5,476.9 1180.1,476.7 1180.9,476.4C1181.7,476.1 1182.2,476.2 1182.9,476.2C1183.6,476.2 1184.2,476.1 1184.9,476.4C1185.7,476.8 1186.0,477.0 1187.4,478.4C1188.8,479.8 1191.5,483.0 1193.5,485.0C1195.5,487.0 1197.3,488.8 1199.6,490.2C1201.9,491.6 1204.2,492.6 1207.2,493.2C1210.2,493.8 1214.0,493.6 1217.8,493.8C1221.6,494.0 1226.9,493.8 1229.9,494.2C1232.9,494.6 1234.0,495.4 1236.0,496.0C1238.0,496.6 1239.6,497.3 1242.1,497.5C1244.6,497.7 1248.2,497.3 1251.2,497.2C1254.2,497.1 1258.0,496.2 1260.3,496.6C1262.6,497.0 1263.4,498.2 1264.9,499.6C1266.4,501.0 1267.9,503.5 1269.4,504.8C1270.9,506.1 1272.5,507.1 1274.0,507.5C1275.5,507.9 1276.7,507.6 1278.5,507.2C1280.3,506.8 1282.6,505.6 1284.6,505.1C1286.6,504.6 1288.2,504.2 1290.7,504.2C1293.2,504.2 1296.3,504.9 1299.8,505.1C1303.3,505.3 1307.9,505.3 1311.9,505.4C1316.0,505.4 1321.0,505.0 1324.1,505.4C1327.1,505.8 1327.7,506.5 1330.2,507.8C1332.7,509.1 1336.3,511.5 1339.3,513.0C1342.3,514.5 1345.4,516.0 1348.4,516.6C1351.4,517.2 1354.5,517.1 1357.5,516.9C1360.5,516.7 1364.3,516.4 1366.6,515.4C1368.9,514.4 1369.9,513.9 1371.2,510.9C1372.5,507.9 1373.2,501.0 1374.2,497.2C1375.2,493.4 1376.2,490.1 1377.2,488.1C1378.2,486.1 1379.2,485.9 1380.3,485.4C1381.4,484.9 1382.4,484.5 1383.6,485.2C1384.8,485.9 1386.2,487.8 1387.6,489.7C1389.0,491.6 1390.3,494.6 1392.1,496.4C1393.9,498.2 1395.9,499.4 1398.2,500.4C1400.5,501.4 1403.0,502.1 1405.8,502.5C1408.6,502.9 1412.6,503.0 1414.9,502.5C1417.2,502.0 1418.0,500.8 1419.5,499.5C1421.0,498.2 1422.5,495.8 1424.0,494.9C1425.5,494.0 1427.1,493.9 1428.6,494.0C1430.1,494.1 1431.4,494.6 1433.2,495.2C1435.0,495.8 1436.9,497.1 1439.2,497.9C1441.5,498.7 1443.5,499.4 1446.8,499.8C1450.1,500.2 1455.2,499.8 1459.0,500.4C1462.8,500.9 1466.1,502.6 1469.6,503.1C1473.1,503.7 1476.4,503.8 1480.2,503.7C1484.0,503.6 1488.9,503.2 1492.4,502.5C1496.0,501.8 1498.5,500.3 1501.5,499.5C1504.5,498.7 1506.5,498.1 1510.6,497.6C1514.6,497.1 1520.2,497.0 1525.8,496.7C1531.4,496.4 1538.4,496.1 1544.0,495.8C1549.6,495.6 1555.4,495.4 1559.2,495.2C1563.0,494.9 1564.8,494.9 1566.8,494.3C1568.8,493.8 1569.9,493.3 1571.3,491.9C1572.7,490.5 1573.7,488.9 1575.0,485.8C1576.3,482.8 1577.5,477.4 1578.9,473.6C1580.3,469.8 1581.7,467.1 1583.5,463.0C1585.3,458.9 1587.3,454.1 1589.6,449.3C1591.9,444.5 1594.9,439.0 1597.2,434.2C1599.5,429.4 1601.2,425.1 1603.2,420.5C1605.2,415.9 1607.3,410.9 1609.3,406.8C1611.3,402.8 1613.4,399.1 1615.4,396.2C1617.4,393.3 1619.2,391.1 1621.5,389.2C1623.8,387.3 1626.3,385.7 1629.1,384.6C1631.9,383.5 1635.4,383.7 1638.2,382.8C1641.0,381.9 1643.5,380.8 1645.8,379.5C1648.1,378.2 1650.1,375.9 1651.8,374.9C1653.5,373.9 1654.9,373.8 1655.9,373.5C1656.9,373.3 1657.2,373.4 1657.9,373.4C1658.6,373.4 1658.9,373.3 1659.9,373.5C1660.9,373.8 1662.0,373.8 1664.0,374.9C1666.0,376.0 1668.8,378.6 1671.6,380.1C1674.4,381.6 1677.2,382.9 1680.7,384.0C1684.2,385.1 1689.3,385.9 1692.8,386.5C1696.3,387.1 1699.4,387.6 1701.9,387.7C1704.4,387.8 1706.0,387.8 1708.0,387.1C1710.0,386.4 1711.8,385.4 1714.1,383.4C1716.4,381.4 1719.7,377.7 1721.7,374.9C1723.7,372.1 1724.7,369.5 1726.2,366.7C1727.7,363.9 1729.3,360.1 1730.8,358.2C1732.3,356.3 1733.9,355.7 1735.4,355.2C1736.9,354.7 1738.1,354.8 1739.9,355.2C1741.7,355.6 1744.0,356.3 1746.0,357.6C1748.0,358.9 1750.1,360.2 1752.1,362.8C1754.1,365.4 1756.4,369.9 1758.1,373.4C1759.8,376.9 1760.9,381.7 1762.1,384.0C1763.3,386.3 1764.1,386.7 1765.1,387.1C1766.1,387.5 1767.2,388.0 1768.2,386.5C1769.2,385.0 1770.3,380.7 1771.2,378.0C1772.1,375.3 1772.7,373.2 1773.6,370.5C1774.5,367.8 1775.5,363.6 1776.7,361.5C1777.9,359.4 1779.4,358.4 1780.6,357.8C1781.8,357.2 1782.4,357.2 1783.7,358.1C1785.0,359.0 1786.4,360.7 1788.2,363.0C1790.0,365.3 1792.0,369.6 1794.3,372.1C1796.6,374.6 1799.4,376.6 1801.9,378.2C1804.4,379.8 1807.5,381.0 1809.5,381.5C1811.5,382.0 1812.6,382.5 1814.0,381.2C1815.4,379.9 1816.8,379.9 1817.8,373.6C1818.8,367.3 1819.1,352.2 1819.9,343.3C1820.6,334.4 1821.6,325.6 1822.3,320.5C1823.0,315.4 1823.5,314.5 1824.1,312.9C1824.7,311.3 1825.5,311.4 1826.1,311.0C1826.7,310.7 1827.1,310.8 1827.7,310.8C1828.3,310.8 1828.9,310.7 1829.7,311.0C1830.5,311.2 1830.9,311.5 1832.3,312.3C1833.7,313.1 1836.3,315.1 1838.3,315.9C1840.3,316.6 1842.7,317.3 1844.4,316.8C1846.1,316.3 1847.0,314.8 1848.4,312.9C1849.8,311.0 1851.2,307.0 1852.6,305.3C1854.0,303.6 1855.3,303.3 1856.6,302.9C1857.9,302.5 1859.0,302.3 1860.5,302.9C1862.0,303.4 1863.8,305.2 1865.7,306.2C1867.6,307.2 1869.4,308.6 1871.7,308.9C1874.0,309.2 1876.5,308.4 1879.3,308.0C1882.1,307.6 1885.7,306.9 1888.5,306.8C1891.3,306.8 1893.2,306.9 1896.0,307.7C1898.8,308.5 1902.4,310.3 1905.2,311.4C1908.0,312.5 1910.5,313.0 1912.8,314.4C1915.1,315.8 1917.0,317.6 1918.8,319.6C1920.6,321.6 1921.9,323.7 1923.4,326.6C1924.9,329.5 1926.1,333.7 1927.9,337.2C1929.7,340.7 1932.0,344.8 1934.0,347.8C1936.0,350.8 1938.1,353.6 1940.1,355.4C1942.1,357.2 1943.7,358.0 1946.2,358.8C1948.7,359.6 1951.8,360.0 1955.3,360.3C1958.8,360.6 1964.6,361.0 1967.4,360.6C1970.2,360.2 1970.5,359.2 1972.0,357.8C1973.5,356.4 1975.1,353.6 1976.5,352.4C1977.9,351.1 1979.1,350.6 1980.2,350.3C1981.3,350.1 1982.0,350.0 1983.2,350.9C1984.4,351.8 1985.9,353.5 1987.2,355.4C1988.5,357.3 1989.8,360.5 1991.1,362.1C1992.4,363.7 1992.9,364.3 1994.8,364.8C1996.7,365.3 1999.3,365.2 2002.3,365.1C2005.3,365.0 2009.7,364.3 2013.0,363.9C2016.3,363.4 2020.0,363.1 2022.1,362.4C2024.2,361.6 2024.2,361.6 2025.7,359.4C2027.2,357.2 2029.5,354.5 2030.8,349.3C2032.1,344.1 2032.9,335.7 2033.8,328.1C2034.7,320.5 2035.4,310.4 2036.2,303.8C2037.0,297.2 2038.0,292.2 2038.7,288.6C2039.4,285.1 2039.9,283.7 2040.6,282.5C2041.3,281.3 2042.0,280.9 2042.8,281.3C2043.6,281.7 2044.5,282.5 2045.5,285.0C2046.5,287.5 2047.5,292.6 2048.8,296.2C2050.1,299.8 2051.6,304.2 2053.1,306.8C2054.6,309.4 2056.0,310.8 2057.9,312.0C2059.8,313.2 2062.5,313.5 2064.6,313.8C2066.7,314.1 2068.9,313.5 2070.7,313.8C2072.5,314.1 2073.6,314.5 2075.2,315.9C2076.8,317.3 2078.9,320.0 2080.4,322.0C2081.9,324.0 2083.0,326.7 2084.3,328.1C2085.6,329.5 2087.0,330.1 2088.3,330.2C2089.6,330.3 2090.5,330.1 2091.9,329.0C2093.3,327.9 2095.0,325.0 2096.5,323.5C2098.0,322.0 2099.3,320.7 2101.1,319.9C2102.9,319.1 2104.8,318.8 2107.1,318.7C2109.4,318.6 2112.2,319.1 2114.7,319.6C2117.2,320.2 2119.5,320.8 2122.3,322.0C2125.1,323.2 2128.6,325.2 2131.4,326.6C2134.2,328.0 2136.5,329.3 2139.0,330.2C2141.5,331.1 2144.6,330.8 2146.6,332.0C2148.6,333.2 2149.7,334.6 2151.2,337.2C2152.7,339.8 2154.2,343.6 2155.7,347.8C2157.2,352.0 2158.7,358.4 2160.0,362.5C2161.3,366.6 2162.4,369.9 2163.8,372.7C2165.2,375.4 2166.8,377.5 2168.5,379.0C2170.2,380.5 2171.8,381.4 2174.2,381.9C2176.6,382.4 2180.1,382.4 2182.8,382.2C2185.5,382.0 2187.6,381.2 2190.4,380.9C2193.2,380.6 2196.7,380.2 2199.9,380.3C2203.1,380.4 2206.2,381.2 2209.4,381.3C2212.6,381.4 2215.7,380.9 2218.9,380.7C2222.1,380.4 2225.6,379.8 2228.4,379.8C2231.2,379.8 2233.5,380.2 2236.0,380.9C2238.5,381.6 2241.4,382.6 2243.6,384.1C2245.8,385.6 2247.6,388.1 2249.3,389.8C2251.0,391.6 2252.6,393.7 2254.0,394.6C2255.4,395.6 2256.5,395.7 2257.8,395.5C2259.1,395.3 2260.3,394.9 2261.6,393.6C2262.9,392.3 2264.0,389.7 2265.4,387.9C2266.8,386.1 2268.4,383.8 2270.2,382.6C2271.9,381.4 2273.7,381.2 2275.9,380.7C2278.1,380.2 2281.1,379.9 2283.5,379.8C2285.9,379.7 2288.2,379.7 2290.1,380.1C2292.0,380.5 2293.3,381.3 2294.9,382.2C2296.5,383.1 2298.2,384.8 2299.6,385.5C2301.0,386.2 2302.1,386.6 2303.4,386.6C2304.7,386.6 2306.1,386.6 2307.2,385.7C2308.3,384.8 2308.9,383.1 2310.0,381.3C2311.1,379.5 2312.2,376.7 2313.8,374.6C2315.4,372.5 2317.4,370.4 2319.5,368.9C2321.6,367.4 2324.0,366.4 2326.2,365.7C2328.4,365.0 2330.8,364.7 2332.8,364.8C2334.9,364.9 2336.9,365.1 2338.5,366.1C2340.1,367.1 2340.9,368.9 2342.3,370.8C2343.7,372.7 2345.3,375.6 2347.1,377.5C2348.8,379.4 2350.8,380.8 2352.8,382.2C2354.9,383.6 2357.2,384.1 2359.4,385.7C2361.6,387.3 2363.9,389.1 2366.1,391.7C2368.3,394.3 2370.6,398.4 2372.7,401.2C2374.8,404.0 2376.5,406.6 2378.4,408.3C2380.3,410.1 2381.9,410.8 2384.1,411.7C2386.3,412.6 2389.0,413.1 2391.7,413.6C2394.3,414.1 2397.0,414.4 2400.0,414.8C2403.0,415.2 2406.0,415.5 2409.5,416.2C2413.0,416.9 2417.4,418.1 2420.9,419.0C2424.4,419.9 2427.6,421.1 2430.4,421.9C2433.2,422.7 2435.6,423.4 2438.0,423.6C2440.4,423.8 2442.4,423.8 2444.6,423.2C2446.8,422.6 2448.9,420.9 2451.3,420.0C2453.7,419.1 2456.4,418.1 2458.9,417.5C2461.4,416.9 2464.1,416.5 2466.5,416.3C2468.9,416.1 2471.4,415.9 2473.1,416.2C2474.8,416.5 2475.6,416.9 2476.9,418.1C2478.2,419.3 2479.4,421.6 2480.7,423.2C2482.0,424.8 2483.1,426.7 2484.5,427.6C2485.9,428.6 2486.9,428.7 2489.3,428.9C2491.7,429.1 2496.0,428.8 2498.8,428.9C2501.7,429.0 2504.2,429.0 2506.4,429.3C2508.6,429.6 2510.2,430.4 2512.1,430.8C2514.0,431.2 2516.1,431.8 2517.8,431.7C2519.5,431.6 2521.2,431.3 2522.5,430.4C2523.8,429.4 2524.5,427.7 2525.4,426.0C2526.3,424.3 2527.1,421.8 2528.2,420.3C2529.3,418.8 2530.6,417.7 2532.0,417.1C2533.4,416.5 2534.8,416.3 2536.8,416.5C2538.9,416.7 2541.5,417.6 2544.3,418.4C2547.1,419.2 2550.3,420.6 2553.8,421.3C2557.3,422.0 2561.4,422.5 2565.2,422.6C2569.0,422.7 2572.8,422.4 2576.6,421.9C2580.4,421.4 2584.2,420.2 2588.0,419.4C2591.8,418.6 2595.9,417.5 2599.4,416.9C2602.9,416.3 2606.5,416.2 2608.9,415.6C2611.3,415.0 2612.1,414.6 2613.7,413.3C2615.3,412.0 2617.0,409.4 2618.4,408.0C2619.8,406.6 2620.9,405.5 2622.2,404.8C2623.5,404.1 2624.6,403.8 2626.0,403.8C2627.4,403.9 2629.2,404.2 2630.8,405.1C2632.4,406.0 2634.1,407.3 2635.5,408.9C2636.9,410.5 2638.3,413.1 2639.3,414.6C2640.3,416.1 2641.1,417.4 2641.4,418.0" fill="none" stroke="#66dfa2" stroke-width="2.1" stroke-linejoin="round" stroke-linecap="round"/>
<text x="191" y="216.5" font-size="24.3" fill="#a6a6a6" text-anchor="end" font-weight="400" textLength="73.2" lengthAdjust="spacingAndGlyphs" stroke="#a6a6a6" stroke-width="0.45">$2.50B</text>
<text x="191" y="296.4" font-size="24.3" fill="#a6a6a6" text-anchor="end" font-weight="400" textLength="73.2" lengthAdjust="spacingAndGlyphs" stroke="#a6a6a6" stroke-width="0.45">$2.00B</text>
<text x="191" y="376.3" font-size="24.3" fill="#a6a6a6" text-anchor="end" font-weight="400" textLength="73.2" lengthAdjust="spacingAndGlyphs" stroke="#a6a6a6" stroke-width="0.45">$1.50B</text>
<text x="191" y="456.3" font-size="24.3" fill="#a6a6a6" text-anchor="end" font-weight="400" textLength="73.2" lengthAdjust="spacingAndGlyphs" stroke="#a6a6a6" stroke-width="0.45">$1.00B</text>
<text x="191" y="536.2" font-size="24.3" fill="#a6a6a6" text-anchor="end" font-weight="400" textLength="102" lengthAdjust="spacingAndGlyphs" stroke="#a6a6a6" stroke-width="0.45">$500.00M</text>
<text x="191" y="615.3" font-size="24.3" fill="#a6a6a6" text-anchor="end" font-weight="400" textLength="25.7" lengthAdjust="spacingAndGlyphs" stroke="#a6a6a6" stroke-width="0.45">$0</text>
<text x="2666.3" y="216.2" font-size="24.3" fill="#a6a6a6" text-anchor="start" font-weight="400" textLength="57" lengthAdjust="spacingAndGlyphs" stroke="#a6a6a6" stroke-width="0.45">$4.50</text>
<text x="2666.3" y="288.0" font-size="24.3" fill="#a6a6a6" text-anchor="start" font-weight="400" textLength="57" lengthAdjust="spacingAndGlyphs" stroke="#a6a6a6" stroke-width="0.45">$4.00</text>
<text x="2666.3" y="359.9" font-size="24.3" fill="#a6a6a6" text-anchor="start" font-weight="400" textLength="57" lengthAdjust="spacingAndGlyphs" stroke="#a6a6a6" stroke-width="0.45">$3.50</text>
<text x="2666.3" y="431.7" font-size="24.3" fill="#a6a6a6" text-anchor="start" font-weight="400" textLength="57" lengthAdjust="spacingAndGlyphs" stroke="#a6a6a6" stroke-width="0.45">$3.00</text>
<text x="2666.3" y="503.59999999999997" font-size="24.3" fill="#a6a6a6" text-anchor="start" font-weight="400" textLength="57" lengthAdjust="spacingAndGlyphs" stroke="#a6a6a6" stroke-width="0.45">$2.50</text>
<text x="2666.3" y="575.4000000000001" font-size="24.3" fill="#a6a6a6" text-anchor="start" font-weight="400" textLength="57" lengthAdjust="spacingAndGlyphs" stroke="#a6a6a6" stroke-width="0.45">$2.00</text>
<text x="2666.3" y="614.2" font-size="24.3" fill="#a6a6a6" text-anchor="start" font-weight="400" textLength="57" lengthAdjust="spacingAndGlyphs" stroke="#a6a6a6" stroke-width="0.45">$1.73</text>
<text x="307.4" y="643.3" font-size="24.0" fill="#a6a6a6" text-anchor="middle" font-weight="400" textLength="69" lengthAdjust="spacingAndGlyphs" stroke="#a6a6a6" stroke-width="0.45">30 Jan</text>
<text x="414.9" y="643.3" font-size="24.0" fill="#a6a6a6" text-anchor="middle" font-weight="400" textLength="57.4" lengthAdjust="spacingAndGlyphs" stroke="#a6a6a6" stroke-width="0.45">6 Feb</text>
<text x="522.4" y="643.3" font-size="24.0" fill="#a6a6a6" text-anchor="middle" font-weight="400" textLength="69.3" lengthAdjust="spacingAndGlyphs" stroke="#a6a6a6" stroke-width="0.45">13 Feb</text>
<text x="630.0" y="643.3" font-size="24.0" fill="#a6a6a6" text-anchor="middle" font-weight="400" textLength="70.4" lengthAdjust="spacingAndGlyphs" stroke="#a6a6a6" stroke-width="0.45">20 Feb</text>
<text x="737.5" y="643.3" font-size="24.0" fill="#a6a6a6" text-anchor="middle" font-weight="400" textLength="70.4" lengthAdjust="spacingAndGlyphs" stroke="#a6a6a6" stroke-width="0.45">27 Feb</text>
<text x="845.0" y="643.3" font-size="24.0" fill="#a6a6a6" text-anchor="middle" font-weight="400" textLength="59.2" lengthAdjust="spacingAndGlyphs" stroke="#a6a6a6" stroke-width="0.45">6 Mar</text>
<text x="952.5" y="643.3" font-size="24.0" fill="#a6a6a6" text-anchor="middle" font-weight="400" textLength="71.2" lengthAdjust="spacingAndGlyphs" stroke="#a6a6a6" stroke-width="0.45">13 Mar</text>
<text x="1060.0" y="643.3" font-size="24.0" fill="#a6a6a6" text-anchor="middle" font-weight="400" textLength="71.2" lengthAdjust="spacingAndGlyphs" stroke="#a6a6a6" stroke-width="0.45">20 Mar</text>
<text x="1167.6" y="643.3" font-size="24.0" fill="#a6a6a6" text-anchor="middle" font-weight="400" textLength="71.7" lengthAdjust="spacingAndGlyphs" stroke="#a6a6a6" stroke-width="0.45">27 Mar</text>
<text x="1275.1" y="643.3" font-size="24.0" fill="#a6a6a6" text-anchor="middle" font-weight="400" textLength="55.7" lengthAdjust="spacingAndGlyphs" stroke="#a6a6a6" stroke-width="0.45">3 Apr</text>
<text x="1382.6" y="643.3" font-size="24.0" fill="#a6a6a6" text-anchor="middle" font-weight="400" textLength="67.9" lengthAdjust="spacingAndGlyphs" stroke="#a6a6a6" stroke-width="0.45">10 Apr</text>
<text x="1490.1" y="643.3" font-size="24.0" fill="#a6a6a6" text-anchor="middle" font-weight="400" textLength="67.9" lengthAdjust="spacingAndGlyphs" stroke="#a6a6a6" stroke-width="0.45">17 Apr</text>
<text x="1597.6" y="643.3" font-size="24.0" fill="#a6a6a6" text-anchor="middle" font-weight="400" textLength="68.7" lengthAdjust="spacingAndGlyphs" stroke="#a6a6a6" stroke-width="0.45">24 Apr</text>
<text x="1705.2" y="643.3" font-size="24.0" fill="#a6a6a6" text-anchor="middle" font-weight="400" textLength="60.6" lengthAdjust="spacingAndGlyphs" stroke="#a6a6a6" stroke-width="0.45">1 May</text>
<text x="1812.7" y="643.3" font-size="24.0" fill="#a6a6a6" text-anchor="middle" font-weight="400" textLength="61.1" lengthAdjust="spacingAndGlyphs" stroke="#a6a6a6" stroke-width="0.45">8 May</text>
<text x="1920.2" y="643.3" font-size="24.0" fill="#a6a6a6" text-anchor="middle" font-weight="400" textLength="73.3" lengthAdjust="spacingAndGlyphs" stroke="#a6a6a6" stroke-width="0.45">15 May</text>
<text x="2027.7" y="643.3" font-size="24.0" fill="#a6a6a6" text-anchor="middle" font-weight="400" textLength="74.4" lengthAdjust="spacingAndGlyphs" stroke="#a6a6a6" stroke-width="0.45">22 May</text>
<text x="2135.2" y="643.3" font-size="24.0" fill="#a6a6a6" text-anchor="middle" font-weight="400" textLength="74.5" lengthAdjust="spacingAndGlyphs" stroke="#a6a6a6" stroke-width="0.45">29 May</text>
<text x="2242.8" y="643.3" font-size="24.0" fill="#a6a6a6" text-anchor="middle" font-weight="400" stroke="#a6a6a6" stroke-width="0.45">5 Jun</text>
<text x="2350.3" y="643.3" font-size="24.0" fill="#a6a6a6" text-anchor="middle" font-weight="400" stroke="#a6a6a6" stroke-width="0.45">12 Jun</text>
<text x="2457.8" y="643.3" font-size="24.0" fill="#a6a6a6" text-anchor="middle" font-weight="400" stroke="#a6a6a6" stroke-width="0.45">19 Jun</text>
<text x="2565.3" y="643.3" font-size="24.0" fill="#a6a6a6" text-anchor="middle" font-weight="400" stroke="#a6a6a6" stroke-width="0.45">26 Jun</text>
<line x1="2642" x2="2642" y1="209" y2="608.5" stroke="#a3a4a7" stroke-width="2.2" stroke-dasharray="8 4" stroke-dashoffset="4.5"/>
<line x1="208.2" x2="2649" y1="427.9" y2="427.9" stroke="#dedfdf" stroke-width="2" stroke-dasharray="8 4"/>
<circle cx="2641.4" cy="418" r="8.6" fill="#ffffff" stroke="#5dc48c" stroke-width="4"/>
<circle cx="2641.4" cy="457.5" r="8.6" fill="#ffffff" stroke="#e6bd5f" stroke-width="4"/>
<rect x="45.2" y="405" width="205.7" height="44" rx="6" fill="#000"/>
<text x="60.9" y="434" font-size="23.5" fill="#ffffff" text-anchor="start" font-weight="400" textLength="175.1" lengthAdjust="spacingAndGlyphs" stroke="#fff" stroke-width="0.5">1,135,781,091.67</text>
<rect x="2655.2" y="405" width="72.5" height="44" rx="6" fill="#000"/>
<text x="2669.9" y="434" font-size="23.5" fill="#ffffff" text-anchor="start" font-weight="400" textLength="42.6" lengthAdjust="spacingAndGlyphs" stroke="#fff" stroke-width="0.5">2.99</text>
<path d="M213.0,730.8L221.7,731.7L229.5,734.5L238.8,735.5L254.3,733.6L266.8,735.2L279.2,737.0L290.0,735.5L299.4,736.7L310.2,737.6L314.9,739.5L324.2,741.4L330.4,742.9L338.2,741.7L344.4,742.0L352.2,740.4L361.5,739.2L373.9,740.4L384.8,741.7L398.8,741.4L417.4,742.0L429.8,741.4L445.3,740.7L464.0,742.0L488.8,742.3L510.6,742.6L527.6,742.6L538.5,744.2L547.8,743.5L555.6,742.6L566.5,743.2L585.1,744.5L603.7,744.5L616.1,745.1L628.6,744.5L647.2,744.8L665.8,744.8L673.6,744.2L681.4,745.1L703.1,745.7L728.0,746.3L746.6,745.4L774.5,744.8L790.1,743.2L802.5,742.3L818.0,743.2L830.4,743.9L842.9,742.3L858.4,742.6L873.9,742.3L883.2,741.4L895.7,742.0L911.2,742.3L926.7,741.1L937.6,738.6L945.3,739.8L953.1,739.8L959.3,738.3L967.1,738.6L976.4,739.5L982.6,739.2L987.8,735.2L994.0,732.4L1000.2,731.4L1007.9,733.9L1018.8,736.1L1026.6,733.0L1029.7,734.5L1032.8,729.9L1039.0,731.4L1042.1,728.3L1051.4,728.9L1057.6,730.2L1063.9,728.3L1072.5,728.3L1075.7,725.2L1082.5,725.8L1090.2,723.0L1099.6,724.6L1110.4,725.5L1119.8,727.1L1127.5,726.5L1133.7,727.4L1139.0,726.1L1146.1,728.3L1152.4,730.5L1158.6,728.0L1166.3,728.0L1175.7,727.1L1181.9,728.9L1186.5,726.8L1191.2,728.3L1200.5,724.3L1206.7,726.8L1212.9,725.8L1219.1,720.2L1226.9,723.0L1234.7,722.4L1239.3,725.8L1247.1,727.1L1256.4,725.8L1259.5,727.7L1265.7,729.6L1271.3,735.5L1276.6,733.6L1287.5,732.7L1293.7,730.5L1301.4,731.4L1310.7,733.9L1321.6,733.6L1334.0,734.8L1343.4,735.2L1352.7,736.4L1362.0,737.0L1366.6,738.3L1374.4,735.8L1382.2,736.4L1385.3,734.5L1396.1,735.5L1414.8,736.4L1427.2,736.1L1435.0,735.2L1444.3,735.2L1452.0,736.4L1459.8,737.6L1467.6,737.3L1473.8,739.5L1481.6,738.3L1495.5,738.6L1508.0,739.8L1517.3,739.5L1525.0,742.0L1532.8,742.3L1539.0,740.7L1551.4,740.4L1560.7,739.2L1576.3,739.2L1588.7,740.1L1601.1,740.4L1610.4,741.7L1619.8,743.2L1627.5,742.3L1630.6,739.2L1638.4,738.3L1641.5,736.4L1647.7,737.6L1655.5,739.2L1666.3,738.6L1672.5,738.9L1677.2,736.4L1681.9,736.7L1689.6,739.2L1703.6,739.8L1716.0,739.2L1725.3,737.6L1733.1,737.6L1737.8,736.1L1748.6,735.5L1756.4,732.0L1762.0,730.2L1769.3,728.5L1774.0,725.3L1778.6,727.0L1787.9,725.7L1798.2,724.2L1801.9,726.8L1808.4,725.3L1814.0,721.1L1821.5,724.4L1828.0,718.3L1831.7,716.0L1838.3,720.5L1842.9,720.9L1847.6,719.6L1852.2,719.7L1858.8,722.2L1863.4,722.0L1869.0,725.5L1876.5,725.3L1881.1,720.1L1886.7,721.6L1890.4,721.1L1898.8,724.2L1905.3,716.8L1910.9,716.8L1914.6,708.9L1920.2,702.8L1924.0,703.0L1929.6,700.6L1934.2,695.3L1937.9,694.4L1944.5,695.5L1948.2,698.3L1951.9,696.5L1958.4,699.6L1963.1,703.4L1965.9,699.3L1974.3,699.3L1982.7,698.7L1984.5,700.0L1987.3,695.5L1989.5,695.3L1993.8,687.5L2002.2,687.3L2005.9,693.5L2009.1,695.3L2011.5,686.6L2015.3,681.0L2018.1,679.5L2021.4,683.8L2024.2,679.1L2027.4,681.4L2030.7,681.7L2036.7,689.9L2039.5,682.5L2043.2,686.2L2046.0,686.0L2048.8,680.2L2054.4,683.2L2060.0,689.4L2063.7,687.9L2066.5,689.6L2070.2,688.6L2073.0,689.4L2078.6,685.6L2082.3,674.5L2085.7,671.1L2090.7,673.5L2094.5,678.8L2097.6,677.8L2100.0,679.5L2103.8,673.9L2110.3,679.5L2113.1,679.7L2115.9,682.1L2119.0,678.6L2122.4,679.1L2128.6,675.8L2131.7,683.8L2134.5,684.7L2137.3,681.0L2143.8,686.6L2148.5,689.0L2153.1,693.1L2155.9,692.2L2159.7,696.5L2162.5,695.0L2165.3,689.4L2168.0,689.4L2174.6,701.5L2177.4,696.3L2180.2,696.8L2186.7,703.4L2190.4,705.8L2195.1,706.3L2200.7,701.9L2205.3,697.8L2208.1,699.1L2210.9,698.1L2217.4,702.0L2223.0,705.2L2229.5,699.3L2232.3,700.6L2236.4,699.7L2241.7,709.1L2248.5,708.1L2252.1,709.8L2258.1,709.1L2260.5,703.1L2263.4,712.2L2271.3,710.5L2278.6,714.6L2284.6,720.1L2290.6,717.5L2293.0,718.7L2297.8,716.5L2302.6,717.7L2306.2,715.8L2311.0,714.6L2317.1,717.5L2323.1,717.5L2330.3,714.6L2336.3,709.8L2342.3,716.5L2347.2,717.0L2352.0,715.8L2356.8,717.0L2364.0,717.7L2367.6,723.0L2373.6,722.6L2376.5,718.2L2380.8,718.9L2385.7,716.5L2392.9,719.4L2400.1,720.6L2412.1,718.9L2416.9,709.8L2424.2,698.5L2441.0,698.2L2448.2,700.2L2453.0,702.1L2461.5,700.9L2464.6,690.5L2471.1,689.3L2474.7,691.0L2479.5,690.1L2489.1,694.2L2495.2,691.7L2500.0,692.9L2506.0,691.7L2510.8,697.3L2518.0,697.8L2524.0,695.8L2531.3,703.3L2539.7,701.4L2546.9,703.8L2550.5,707.9L2554.1,703.8L2558.9,703.1L2565.0,698.5L2571.0,701.4L2578.2,707.4L2583.0,706.2L2587.8,709.3L2593.9,709.3L2602.3,715.1L2605.9,709.3L2610.7,709.8L2616.0,711.5L2621.0,710.0L2627.0,711.0L2627.0,768.8L213.0,768.8Z" fill="#0b1020" clip-path="url(#co)"/>
<rect x="2143.8" y="649" width="483.2" height="119.8" fill="#050714"/>
<path d="M213.0,730.8L221.7,731.7L229.5,734.5L238.8,735.5L254.3,733.6L266.8,735.2L279.2,737.0L290.0,735.5L299.4,736.7L310.2,737.6L314.9,739.5L324.2,741.4L330.4,742.9L338.2,741.7L344.4,742.0L352.2,740.4L361.5,739.2L373.9,740.4L384.8,741.7L398.8,741.4L417.4,742.0L429.8,741.4L445.3,740.7L464.0,742.0L488.8,742.3L510.6,742.6L527.6,742.6L538.5,744.2L547.8,743.5L555.6,742.6L566.5,743.2L585.1,744.5L603.7,744.5L616.1,745.1L628.6,744.5L647.2,744.8L665.8,744.8L673.6,744.2L681.4,745.1L703.1,745.7L728.0,746.3L746.6,745.4L774.5,744.8L790.1,743.2L802.5,742.3L818.0,743.2L830.4,743.9L842.9,742.3L858.4,742.6L873.9,742.3L883.2,741.4L895.7,742.0L911.2,742.3L926.7,741.1L937.6,738.6L945.3,739.8L953.1,739.8L959.3,738.3L967.1,738.6L976.4,739.5L982.6,739.2L987.8,735.2L994.0,732.4L1000.2,731.4L1007.9,733.9L1018.8,736.1L1026.6,733.0L1029.7,734.5L1032.8,729.9L1039.0,731.4L1042.1,728.3L1051.4,728.9L1057.6,730.2L1063.9,728.3L1072.5,728.3L1075.7,725.2L1082.5,725.8L1090.2,723.0L1099.6,724.6L1110.4,725.5L1119.8,727.1L1127.5,726.5L1133.7,727.4L1139.0,726.1L1146.1,728.3L1152.4,730.5L1158.6,728.0L1166.3,728.0L1175.7,727.1L1181.9,728.9L1186.5,726.8L1191.2,728.3L1200.5,724.3L1206.7,726.8L1212.9,725.8L1219.1,720.2L1226.9,723.0L1234.7,722.4L1239.3,725.8L1247.1,727.1L1256.4,725.8L1259.5,727.7L1265.7,729.6L1271.3,735.5L1276.6,733.6L1287.5,732.7L1293.7,730.5L1301.4,731.4L1310.7,733.9L1321.6,733.6L1334.0,734.8L1343.4,735.2L1352.7,736.4L1362.0,737.0L1366.6,738.3L1374.4,735.8L1382.2,736.4L1385.3,734.5L1396.1,735.5L1414.8,736.4L1427.2,736.1L1435.0,735.2L1444.3,735.2L1452.0,736.4L1459.8,737.6L1467.6,737.3L1473.8,739.5L1481.6,738.3L1495.5,738.6L1508.0,739.8L1517.3,739.5L1525.0,742.0L1532.8,742.3L1539.0,740.7L1551.4,740.4L1560.7,739.2L1576.3,739.2L1588.7,740.1L1601.1,740.4L1610.4,741.7L1619.8,743.2L1627.5,742.3L1630.6,739.2L1638.4,738.3L1641.5,736.4L1647.7,737.6L1655.5,739.2L1666.3,738.6L1672.5,738.9L1677.2,736.4L1681.9,736.7L1689.6,739.2L1703.6,739.8L1716.0,739.2L1725.3,737.6L1733.1,737.6L1737.8,736.1L1748.6,735.5L1756.4,732.0L1762.0,730.2L1769.3,728.5L1774.0,725.3L1778.6,727.0L1787.9,725.7L1798.2,724.2L1801.9,726.8L1808.4,725.3L1814.0,721.1L1821.5,724.4L1828.0,718.3L1831.7,716.0L1838.3,720.5L1842.9,720.9L1847.6,719.6L1852.2,719.7L1858.8,722.2L1863.4,722.0L1869.0,725.5L1876.5,725.3L1881.1,720.1L1886.7,721.6L1890.4,721.1L1898.8,724.2L1905.3,716.8L1910.9,716.8L1914.6,708.9L1920.2,702.8L1924.0,703.0L1929.6,700.6L1934.2,695.3L1937.9,694.4L1944.5,695.5L1948.2,698.3L1951.9,696.5L1958.4,699.6L1963.1,703.4L1965.9,699.3L1974.3,699.3L1982.7,698.7L1984.5,700.0L1987.3,695.5L1989.5,695.3L1993.8,687.5L2002.2,687.3L2005.9,693.5L2009.1,695.3L2011.5,686.6L2015.3,681.0L2018.1,679.5L2021.4,683.8L2024.2,679.1L2027.4,681.4L2030.7,681.7L2036.7,689.9L2039.5,682.5L2043.2,686.2L2046.0,686.0L2048.8,680.2L2054.4,683.2L2060.0,689.4L2063.7,687.9L2066.5,689.6L2070.2,688.6L2073.0,689.4L2078.6,685.6L2082.3,674.5L2085.7,671.1L2090.7,673.5L2094.5,678.8L2097.6,677.8L2100.0,679.5L2103.8,673.9L2110.3,679.5L2113.1,679.7L2115.9,682.1L2119.0,678.6L2122.4,679.1L2128.6,675.8L2131.7,683.8L2134.5,684.7L2137.3,681.0L2143.8,686.6L2148.5,689.0L2153.1,693.1L2155.9,692.2L2159.7,696.5L2162.5,695.0L2165.3,689.4L2168.0,689.4L2174.6,701.5L2177.4,696.3L2180.2,696.8L2186.7,703.4L2190.4,705.8L2195.1,706.3L2200.7,701.9L2205.3,697.8L2208.1,699.1L2210.9,698.1L2217.4,702.0L2223.0,705.2L2229.5,699.3L2232.3,700.6L2236.4,699.7L2241.7,709.1L2248.5,708.1L2252.1,709.8L2258.1,709.1L2260.5,703.1L2263.4,712.2L2271.3,710.5L2278.6,714.6L2284.6,720.1L2290.6,717.5L2293.0,718.7L2297.8,716.5L2302.6,717.7L2306.2,715.8L2311.0,714.6L2317.1,717.5L2323.1,717.5L2330.3,714.6L2336.3,709.8L2342.3,716.5L2347.2,717.0L2352.0,715.8L2356.8,717.0L2364.0,717.7L2367.6,723.0L2373.6,722.6L2376.5,718.2L2380.8,718.9L2385.7,716.5L2392.9,719.4L2400.1,720.6L2412.1,718.9L2416.9,709.8L2424.2,698.5L2441.0,698.2L2448.2,700.2L2453.0,702.1L2461.5,700.9L2464.6,690.5L2471.1,689.3L2474.7,691.0L2479.5,690.1L2489.1,694.2L2495.2,691.7L2500.0,692.9L2506.0,691.7L2510.8,697.3L2518.0,697.8L2524.0,695.8L2531.3,703.3L2539.7,701.4L2546.9,703.8L2550.5,707.9L2554.1,703.8L2558.9,703.1L2565.0,698.5L2571.0,701.4L2578.2,707.4L2583.0,706.2L2587.8,709.3L2593.9,709.3L2602.3,715.1L2605.9,709.3L2610.7,709.8L2616.0,711.5L2621.0,710.0L2627.0,711.0L2627.0,768.8L213.0,768.8Z" fill="url(#gs)" clip-path="url(#cw)"/>
<rect x="2143.8" y="649" width="483.2" height="119.8" fill="url(#gh)"/>
<path d="M213.0,730.8L221.7,731.7L229.5,734.5L238.8,735.5L254.3,733.6L266.8,735.2L279.2,737.0L290.0,735.5L299.4,736.7L310.2,737.6L314.9,739.5L324.2,741.4L330.4,742.9L338.2,741.7L344.4,742.0L352.2,740.4L361.5,739.2L373.9,740.4L384.8,741.7L398.8,741.4L417.4,742.0L429.8,741.4L445.3,740.7L464.0,742.0L488.8,742.3L510.6,742.6L527.6,742.6L538.5,744.2L547.8,743.5L555.6,742.6L566.5,743.2L585.1,744.5L603.7,744.5L616.1,745.1L628.6,744.5L647.2,744.8L665.8,744.8L673.6,744.2L681.4,745.1L703.1,745.7L728.0,746.3L746.6,745.4L774.5,744.8L790.1,743.2L802.5,742.3L818.0,743.2L830.4,743.9L842.9,742.3L858.4,742.6L873.9,742.3L883.2,741.4L895.7,742.0L911.2,742.3L926.7,741.1L937.6,738.6L945.3,739.8L953.1,739.8L959.3,738.3L967.1,738.6L976.4,739.5L982.6,739.2L987.8,735.2L994.0,732.4L1000.2,731.4L1007.9,733.9L1018.8,736.1L1026.6,733.0L1029.7,734.5L1032.8,729.9L1039.0,731.4L1042.1,728.3L1051.4,728.9L1057.6,730.2L1063.9,728.3L1072.5,728.3L1075.7,725.2L1082.5,725.8L1090.2,723.0L1099.6,724.6L1110.4,725.5L1119.8,727.1L1127.5,726.5L1133.7,727.4L1139.0,726.1L1146.1,728.3L1152.4,730.5L1158.6,728.0L1166.3,728.0L1175.7,727.1L1181.9,728.9L1186.5,726.8L1191.2,728.3L1200.5,724.3L1206.7,726.8L1212.9,725.8L1219.1,720.2L1226.9,723.0L1234.7,722.4L1239.3,725.8L1247.1,727.1L1256.4,725.8L1259.5,727.7L1265.7,729.6L1271.3,735.5L1276.6,733.6L1287.5,732.7L1293.7,730.5L1301.4,731.4L1310.7,733.9L1321.6,733.6L1334.0,734.8L1343.4,735.2L1352.7,736.4L1362.0,737.0L1366.6,738.3L1374.4,735.8L1382.2,736.4L1385.3,734.5L1396.1,735.5L1414.8,736.4L1427.2,736.1L1435.0,735.2L1444.3,735.2L1452.0,736.4L1459.8,737.6L1467.6,737.3L1473.8,739.5L1481.6,738.3L1495.5,738.6L1508.0,739.8L1517.3,739.5L1525.0,742.0L1532.8,742.3L1539.0,740.7L1551.4,740.4L1560.7,739.2L1576.3,739.2L1588.7,740.1L1601.1,740.4L1610.4,741.7L1619.8,743.2L1627.5,742.3L1630.6,739.2L1638.4,738.3L1641.5,736.4L1647.7,737.6L1655.5,739.2L1666.3,738.6L1672.5,738.9L1677.2,736.4L1681.9,736.7L1689.6,739.2L1703.6,739.8L1716.0,739.2L1725.3,737.6L1733.1,737.6L1737.8,736.1L1748.6,735.5L1756.4,732.0L1762.0,730.2L1769.3,728.5L1774.0,725.3L1778.6,727.0L1787.9,725.7L1798.2,724.2L1801.9,726.8L1808.4,725.3L1814.0,721.1L1821.5,724.4L1828.0,718.3L1831.7,716.0L1838.3,720.5L1842.9,720.9L1847.6,719.6L1852.2,719.7L1858.8,722.2L1863.4,722.0L1869.0,725.5L1876.5,725.3L1881.1,720.1L1886.7,721.6L1890.4,721.1L1898.8,724.2L1905.3,716.8L1910.9,716.8L1914.6,708.9L1920.2,702.8L1924.0,703.0L1929.6,700.6L1934.2,695.3L1937.9,694.4L1944.5,695.5L1948.2,698.3L1951.9,696.5L1958.4,699.6L1963.1,703.4L1965.9,699.3L1974.3,699.3L1982.7,698.7L1984.5,700.0L1987.3,695.5L1989.5,695.3L1993.8,687.5L2002.2,687.3L2005.9,693.5L2009.1,695.3L2011.5,686.6L2015.3,681.0L2018.1,679.5L2021.4,683.8L2024.2,679.1L2027.4,681.4L2030.7,681.7L2036.7,689.9L2039.5,682.5L2043.2,686.2L2046.0,686.0L2048.8,680.2L2054.4,683.2L2060.0,689.4L2063.7,687.9L2066.5,689.6L2070.2,688.6L2073.0,689.4L2078.6,685.6L2082.3,674.5L2085.7,671.1L2090.7,673.5L2094.5,678.8L2097.6,677.8L2100.0,679.5L2103.8,673.9L2110.3,679.5L2113.1,679.7L2115.9,682.1L2119.0,678.6L2122.4,679.1L2128.6,675.8L2131.7,683.8L2134.5,684.7L2137.3,681.0L2143.8,686.6L2148.5,689.0L2153.1,693.1L2155.9,692.2L2159.7,696.5L2162.5,695.0L2165.3,689.4L2168.0,689.4L2174.6,701.5L2177.4,696.3L2180.2,696.8L2186.7,703.4L2190.4,705.8L2195.1,706.3L2200.7,701.9L2205.3,697.8L2208.1,699.1L2210.9,698.1L2217.4,702.0L2223.0,705.2L2229.5,699.3L2232.3,700.6L2236.4,699.7L2241.7,709.1L2248.5,708.1L2252.1,709.8L2258.1,709.1L2260.5,703.1L2263.4,712.2L2271.3,710.5L2278.6,714.6L2284.6,720.1L2290.6,717.5L2293.0,718.7L2297.8,716.5L2302.6,717.7L2306.2,715.8L2311.0,714.6L2317.1,717.5L2323.1,717.5L2330.3,714.6L2336.3,709.8L2342.3,716.5L2347.2,717.0L2352.0,715.8L2356.8,717.0L2364.0,717.7L2367.6,723.0L2373.6,722.6L2376.5,718.2L2380.8,718.9L2385.7,716.5L2392.9,719.4L2400.1,720.6L2412.1,718.9L2416.9,709.8L2424.2,698.5L2441.0,698.2L2448.2,700.2L2453.0,702.1L2461.5,700.9L2464.6,690.5L2471.1,689.3L2474.7,691.0L2479.5,690.1L2489.1,694.2L2495.2,691.7L2500.0,692.9L2506.0,691.7L2510.8,697.3L2518.0,697.8L2524.0,695.8L2531.3,703.3L2539.7,701.4L2546.9,703.8L2550.5,707.9L2554.1,703.8L2558.9,703.1L2565.0,698.5L2571.0,701.4L2578.2,707.4L2583.0,706.2L2587.8,709.3L2593.9,709.3L2602.3,715.1L2605.9,709.3L2610.7,709.8L2616.0,711.5L2621.0,710.0L2627.0,711.0" fill="none" stroke="#3f5fc4" stroke-width="1.25" stroke-linejoin="round" clip-path="url(#co)"/>
<path d="M213.0,730.8L221.7,731.7L229.5,734.5L238.8,735.5L254.3,733.6L266.8,735.2L279.2,737.0L290.0,735.5L299.4,736.7L310.2,737.6L314.9,739.5L324.2,741.4L330.4,742.9L338.2,741.7L344.4,742.0L352.2,740.4L361.5,739.2L373.9,740.4L384.8,741.7L398.8,741.4L417.4,742.0L429.8,741.4L445.3,740.7L464.0,742.0L488.8,742.3L510.6,742.6L527.6,742.6L538.5,744.2L547.8,743.5L555.6,742.6L566.5,743.2L585.1,744.5L603.7,744.5L616.1,745.1L628.6,744.5L647.2,744.8L665.8,744.8L673.6,744.2L681.4,745.1L703.1,745.7L728.0,746.3L746.6,745.4L774.5,744.8L790.1,743.2L802.5,742.3L818.0,743.2L830.4,743.9L842.9,742.3L858.4,742.6L873.9,742.3L883.2,741.4L895.7,742.0L911.2,742.3L926.7,741.1L937.6,738.6L945.3,739.8L953.1,739.8L959.3,738.3L967.1,738.6L976.4,739.5L982.6,739.2L987.8,735.2L994.0,732.4L1000.2,731.4L1007.9,733.9L1018.8,736.1L1026.6,733.0L1029.7,734.5L1032.8,729.9L1039.0,731.4L1042.1,728.3L1051.4,728.9L1057.6,730.2L1063.9,728.3L1072.5,728.3L1075.7,725.2L1082.5,725.8L1090.2,723.0L1099.6,724.6L1110.4,725.5L1119.8,727.1L1127.5,726.5L1133.7,727.4L1139.0,726.1L1146.1,728.3L1152.4,730.5L1158.6,728.0L1166.3,728.0L1175.7,727.1L1181.9,728.9L1186.5,726.8L1191.2,728.3L1200.5,724.3L1206.7,726.8L1212.9,725.8L1219.1,720.2L1226.9,723.0L1234.7,722.4L1239.3,725.8L1247.1,727.1L1256.4,725.8L1259.5,727.7L1265.7,729.6L1271.3,735.5L1276.6,733.6L1287.5,732.7L1293.7,730.5L1301.4,731.4L1310.7,733.9L1321.6,733.6L1334.0,734.8L1343.4,735.2L1352.7,736.4L1362.0,737.0L1366.6,738.3L1374.4,735.8L1382.2,736.4L1385.3,734.5L1396.1,735.5L1414.8,736.4L1427.2,736.1L1435.0,735.2L1444.3,735.2L1452.0,736.4L1459.8,737.6L1467.6,737.3L1473.8,739.5L1481.6,738.3L1495.5,738.6L1508.0,739.8L1517.3,739.5L1525.0,742.0L1532.8,742.3L1539.0,740.7L1551.4,740.4L1560.7,739.2L1576.3,739.2L1588.7,740.1L1601.1,740.4L1610.4,741.7L1619.8,743.2L1627.5,742.3L1630.6,739.2L1638.4,738.3L1641.5,736.4L1647.7,737.6L1655.5,739.2L1666.3,738.6L1672.5,738.9L1677.2,736.4L1681.9,736.7L1689.6,739.2L1703.6,739.8L1716.0,739.2L1725.3,737.6L1733.1,737.6L1737.8,736.1L1748.6,735.5L1756.4,732.0L1762.0,730.2L1769.3,728.5L1774.0,725.3L1778.6,727.0L1787.9,725.7L1798.2,724.2L1801.9,726.8L1808.4,725.3L1814.0,721.1L1821.5,724.4L1828.0,718.3L1831.7,716.0L1838.3,720.5L1842.9,720.9L1847.6,719.6L1852.2,719.7L1858.8,722.2L1863.4,722.0L1869.0,725.5L1876.5,725.3L1881.1,720.1L1886.7,721.6L1890.4,721.1L1898.8,724.2L1905.3,716.8L1910.9,716.8L1914.6,708.9L1920.2,702.8L1924.0,703.0L1929.6,700.6L1934.2,695.3L1937.9,694.4L1944.5,695.5L1948.2,698.3L1951.9,696.5L1958.4,699.6L1963.1,703.4L1965.9,699.3L1974.3,699.3L1982.7,698.7L1984.5,700.0L1987.3,695.5L1989.5,695.3L1993.8,687.5L2002.2,687.3L2005.9,693.5L2009.1,695.3L2011.5,686.6L2015.3,681.0L2018.1,679.5L2021.4,683.8L2024.2,679.1L2027.4,681.4L2030.7,681.7L2036.7,689.9L2039.5,682.5L2043.2,686.2L2046.0,686.0L2048.8,680.2L2054.4,683.2L2060.0,689.4L2063.7,687.9L2066.5,689.6L2070.2,688.6L2073.0,689.4L2078.6,685.6L2082.3,674.5L2085.7,671.1L2090.7,673.5L2094.5,678.8L2097.6,677.8L2100.0,679.5L2103.8,673.9L2110.3,679.5L2113.1,679.7L2115.9,682.1L2119.0,678.6L2122.4,679.1L2128.6,675.8L2131.7,683.8L2134.5,684.7L2137.3,681.0L2143.8,686.6L2148.5,689.0L2153.1,693.1L2155.9,692.2L2159.7,696.5L2162.5,695.0L2165.3,689.4L2168.0,689.4L2174.6,701.5L2177.4,696.3L2180.2,696.8L2186.7,703.4L2190.4,705.8L2195.1,706.3L2200.7,701.9L2205.3,697.8L2208.1,699.1L2210.9,698.1L2217.4,702.0L2223.0,705.2L2229.5,699.3L2232.3,700.6L2236.4,699.7L2241.7,709.1L2248.5,708.1L2252.1,709.8L2258.1,709.1L2260.5,703.1L2263.4,712.2L2271.3,710.5L2278.6,714.6L2284.6,720.1L2290.6,717.5L2293.0,718.7L2297.8,716.5L2302.6,717.7L2306.2,715.8L2311.0,714.6L2317.1,717.5L2323.1,717.5L2330.3,714.6L2336.3,709.8L2342.3,716.5L2347.2,717.0L2352.0,715.8L2356.8,717.0L2364.0,717.7L2367.6,723.0L2373.6,722.6L2376.5,718.2L2380.8,718.9L2385.7,716.5L2392.9,719.4L2400.1,720.6L2412.1,718.9L2416.9,709.8L2424.2,698.5L2441.0,698.2L2448.2,700.2L2453.0,702.1L2461.5,700.9L2464.6,690.5L2471.1,689.3L2474.7,691.0L2479.5,690.1L2489.1,694.2L2495.2,691.7L2500.0,692.9L2506.0,691.7L2510.8,697.3L2518.0,697.8L2524.0,695.8L2531.3,703.3L2539.7,701.4L2546.9,703.8L2550.5,707.9L2554.1,703.8L2558.9,703.1L2565.0,698.5L2571.0,701.4L2578.2,707.4L2583.0,706.2L2587.8,709.3L2593.9,709.3L2602.3,715.1L2605.9,709.3L2610.7,709.8L2616.0,711.5L2621.0,710.0L2627.0,711.0" fill="none" stroke="#7b8fca" stroke-width="1.0" stroke-linejoin="round" clip-path="url(#cw)"/>
<rect x="2131.4" y="694.5" width="28.4" height="34.5" rx="11" fill="#30323f" fill-opacity="0.95"/>
<rect x="2141.6" y="705.8" width="2.2" height="11.6" fill="#8b8d99"/>
<rect x="2147.6" y="705.8" width="2.2" height="11.6" fill="#8b8d99"/>
<rect x="2611.0" y="694.5" width="28.4" height="34.5" rx="11" fill="#30323f" fill-opacity="0.95"/>
<rect x="2621.2" y="705.8" width="2.2" height="11.6" fill="#8b8d99"/>
<rect x="2627.2" y="705.8" width="2.2" height="11.6" fill="#8b8d99"/>
<rect x="2540" y="614.5" width="204.2" height="44.3" rx="6" fill="#000"/>
<text x="2730" y="643" font-size="23.3" fill="#ffffff" text-anchor="end" font-weight="400" textLength="176.5" lengthAdjust="spacingAndGlyphs" stroke="#fff" stroke-width="0.7">1 Jul 2025, 03:00</text>
<path d="M2600,554.8L2604.6,552" stroke="#8e8f92" stroke-width="1.8" fill="none"/>
<path d="M2600,557.2Q2604.8,557.6 2604.8,562.2Q2604.8,567 2600,567.6" stroke="#8e8f92" stroke-width="2" fill="none"/>
<rect x="2193.7" y="473" width="408.1" height="209.4" rx="16" fill="#000" opacity="0.55" filter="url(#sh)"/>
<rect x="2193.7" y="469" width="408.1" height="209.8" rx="16" fill="#03050a"/>
<text x="2224.4" y="530.5" font-size="30" fill="#ffffff" text-anchor="start" font-weight="400" textLength="221.5" lengthAdjust="spacingAndGlyphs" stroke="#fff" stroke-width="0.8">1 Jul 2025, 03:00</text>
<circle cx="2233.3" cy="583.8" r="8.5" fill="#e6bd5f" stroke="#e3e5ea" stroke-width="4"/>
<text x="2251.6" y="594.3" font-size="30.8" fill="#d0d5e0" text-anchor="start" font-weight="400" textLength="123.4" lengthAdjust="spacingAndGlyphs" stroke="#d0d5e0" stroke-width="0.35">SUI Price</text>
<text x="2571.1" y="594.3" font-size="30.5" fill="#ffffff" text-anchor="end" font-weight="400" textLength="72.1" lengthAdjust="spacingAndGlyphs" stroke="#fff" stroke-width="0.8">$2.78</text>
<circle cx="2233.3" cy="628.1" r="8.5" fill="#5dc48c" stroke="#e3e5ea" stroke-width="4"/>
<text x="2251.6" y="638.5" font-size="30.8" fill="#d0d5e0" text-anchor="start" font-weight="400" textLength="186.7" lengthAdjust="spacingAndGlyphs" stroke="#d0d5e0" stroke-width="0.35">Open Interest</text>
<text x="2571.1" y="638.5" font-size="30.5" fill="#ffffff" text-anchor="end" font-weight="400" textLength="91.7" lengthAdjust="spacingAndGlyphs" stroke="#fff" stroke-width="0.8">$1.19B</text>
</svg></body></html>
